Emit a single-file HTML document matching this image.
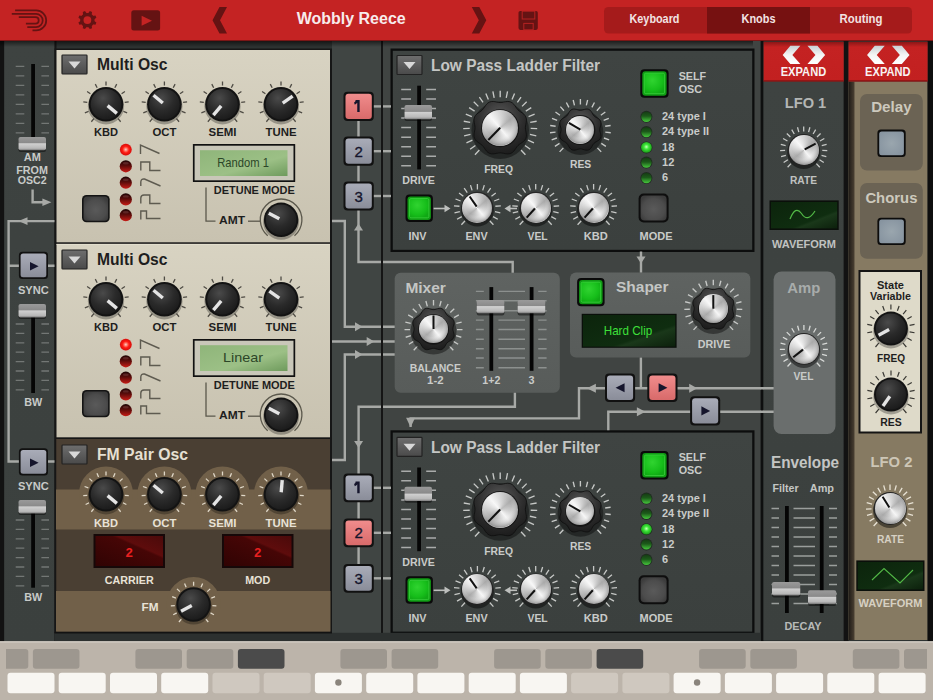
<!DOCTYPE html><html><head><meta charset="utf-8"><style>html,body{margin:0;padding:0;background:#2c302f;width:933px;height:700px;overflow:hidden}svg{display:block}</style></head><body>
<svg width="933" height="700" viewBox="0 0 933 700" font-family="'Liberation Sans', sans-serif">

<defs>
<radialGradient id="gBlack" cx="0.4" cy="0.3" r="0.75">
  <stop offset="0" stop-color="#4a4a4a"/><stop offset="0.55" stop-color="#2a2a2a"/><stop offset="1" stop-color="#1a1a1a"/>
</radialGradient>
<radialGradient id="gDarkRing" cx="0.5" cy="0.3" r="0.75">
  <stop offset="0" stop-color="#5a5a5a"/><stop offset="0.6" stop-color="#2c2c2c"/><stop offset="1" stop-color="#1a1a1a"/>
</radialGradient>
<linearGradient id="gSilver" x1="0" y1="0" x2="1" y2="1">
  <stop offset="0" stop-color="#ffffff"/><stop offset="0.45" stop-color="#d8d8d8"/><stop offset="0.55" stop-color="#f0f0f0"/><stop offset="1" stop-color="#8a8a8a"/>
</linearGradient>
<radialGradient id="gSilver2" cx="0.45" cy="0.4" r="0.6">
  <stop offset="0" stop-color="rgba(255,255,255,0.35)"/><stop offset="0.6" stop-color="rgba(255,255,255,0)"/><stop offset="1" stop-color="rgba(0,0,0,0.3)"/>
</radialGradient>
<linearGradient id="gDrop" x1="0" y1="0" x2="0" y2="1">
  <stop offset="0" stop-color="#6e6e6e"/><stop offset="1" stop-color="#4a4a4a"/>
</linearGradient>
<radialGradient id="gGreen" cx="0.4" cy="0.35" r="0.7">
  <stop offset="0" stop-color="#30d430"/><stop offset="0.7" stop-color="#16be1a"/><stop offset="1" stop-color="#10a814"/>
</radialGradient>
<linearGradient id="gGrayBtn" x1="0" y1="0" x2="0" y2="1">
  <stop offset="0" stop-color="#4d4d4d"/><stop offset="1" stop-color="#3a3a3a"/>
</linearGradient>
<linearGradient id="gBlueBtn" x1="0" y1="0" x2="0" y2="1">
  <stop offset="0" stop-color="#a9acb8"/><stop offset="1" stop-color="#8a8d99"/>
</linearGradient>
<linearGradient id="gRedBtn" x1="0" y1="0" x2="0" y2="1">
  <stop offset="0" stop-color="#f08c8c"/><stop offset="1" stop-color="#d86a6a"/>
</linearGradient>
<linearGradient id="gHandle" x1="0" y1="0" x2="0" y2="1">
  <stop offset="0" stop-color="#e8e8e8"/><stop offset="0.5" stop-color="#b4b4b4"/><stop offset="1" stop-color="#8c8c8c"/>
</linearGradient>
<linearGradient id="gLcdGreen" x1="0" y1="0" x2="1" y2="1">
  <stop offset="0" stop-color="#8fb57a"/><stop offset="0.6" stop-color="#9cc086"/><stop offset="1" stop-color="#6e9a5c"/>
</linearGradient>
<linearGradient id="gLcdDark" x1="0" y1="0" x2="1" y2="1">
  <stop offset="0" stop-color="#0c240c"/><stop offset="0.65" stop-color="#0f2d10"/><stop offset="0.7" stop-color="#1a381a"/><stop offset="1" stop-color="#0c200c"/>
</linearGradient>
<linearGradient id="gLcdRed" x1="0" y1="1" x2="1" y2="0">
  <stop offset="0" stop-color="#300303"/><stop offset="0.62" stop-color="#460606"/><stop offset="0.66" stop-color="#5e0c0c"/><stop offset="1" stop-color="#4a0a0a"/>
</linearGradient>
<radialGradient id="gLedRed" cx="0.5" cy="0.5" r="0.5">
  <stop offset="0" stop-color="#ffd0c8"/><stop offset="0.3" stop-color="#ff6a5a"/><stop offset="0.55" stop-color="#ff1c14"/><stop offset="1" stop-color="#d40c08"/>
</radialGradient>
<linearGradient id="gLedRedOff" x1="0" y1="0" x2="0" y2="1">
  <stop offset="0" stop-color="#1e0606"/><stop offset="0.45" stop-color="#5a0c0a"/><stop offset="1" stop-color="#c81c16"/>
</linearGradient>
<radialGradient id="gLedGreen" cx="0.5" cy="0.45" r="0.55">
  <stop offset="0" stop-color="#c8ffb8"/><stop offset="0.4" stop-color="#3ee83a"/><stop offset="1" stop-color="#1a9a18"/>
</radialGradient>
<linearGradient id="gLedGreenOff" x1="0" y1="0" x2="0" y2="1">
  <stop offset="0" stop-color="#163a14"/><stop offset="0.45" stop-color="#1c5a1a"/><stop offset="1" stop-color="#46c83c"/>
</linearGradient>
<linearGradient id="gExpand" x1="0" y1="0" x2="0" y2="1">
  <stop offset="0" stop-color="#8a1616"/><stop offset="0.13" stop-color="#c42222"/><stop offset="1" stop-color="#c22020"/>
</linearGradient>
<linearGradient id="gChev" x1="0" y1="0" x2="0" y2="1"><stop offset="0" stop-color="#c8d0d4"/><stop offset="0.5" stop-color="#f4f4f4"/><stop offset="1" stop-color="#ffffff"/></linearGradient>
<linearGradient id="pBrushF" x1="0" y1="0" x2="0" y2="1"><stop offset="0" stop-color="#3f4442"/><stop offset="1" stop-color="#3b403e"/></linearGradient>
<linearGradient id="pBrushM" x1="0" y1="0" x2="0" y2="1"><stop offset="0" stop-color="#5f6361"/><stop offset="1" stop-color="#585c5a"/></linearGradient>
<linearGradient id="pBrushR" x1="0" y1="0" x2="0" y2="1"><stop offset="0" stop-color="#3e4341"/><stop offset="1" stop-color="#3b403e"/></linearGradient>
<linearGradient id="gShadowTop" x1="0" y1="0" x2="0" y2="1"><stop offset="0" stop-color="rgba(0,0,0,0.55)"/><stop offset="1" stop-color="rgba(0,0,0,0)"/></linearGradient>
<linearGradient id="gHandle2" x1="0" y1="0" x2="0" y2="1"><stop offset="0" stop-color="#9a9a9a"/><stop offset="0.45" stop-color="#8a8a8a"/><stop offset="0.5" stop-color="#d0d0d0"/><stop offset="0.85" stop-color="#b8b8b8"/><stop offset="1" stop-color="#7a7a7a"/></linearGradient>
<radialGradient id="gGrayBtnR" cx="0.5" cy="0.55" r="0.6"><stop offset="0" stop-color="#5a5a5a"/><stop offset="0.7" stop-color="#4c4c4c"/><stop offset="1" stop-color="#3c3c3c"/></radialGradient>
<radialGradient id="gSkyBtn" cx="0.5" cy="0.5" r="0.6"><stop offset="0" stop-color="#9aa6ae"/><stop offset="1" stop-color="#8794a0"/></radialGradient>
<linearGradient id="gTanEdge" x1="0" y1="0" x2="1" y2="0"><stop offset="0" stop-color="#1e1a16"/><stop offset="1" stop-color="#4a4032"/></linearGradient>
<linearGradient id="gCream" x1="0" y1="0" x2="0" y2="1"><stop offset="0" stop-color="#d8d3c2"/><stop offset="1" stop-color="#c8c2b0"/></linearGradient>
</defs>

<rect x="0" y="0" width="933" height="700" fill="#2d3231" />
<rect x="0" y="0" width="933" height="41" fill="#c42323" />
<path d="M15.1 10.4H36.2A10 10 0 0 1 36.2 30.4H32.5" fill="none" stroke="#651313" stroke-width="1.75" />
<path d="M11.8 13.9H36.1A6.6 6.6 0 0 1 36.1 27.1H27.3" fill="none" stroke="#651313" stroke-width="1.75" />
<path d="M18.8 17.2H35.5A3.2 3.2 0 0 1 35.5 23.6H25.9" fill="none" stroke="#651313" stroke-width="1.75" />
<path d="M88.01 13.53L89.82 11.12L92.04 12.04L91.61 15.02L92.48 15.89L95.46 15.46L96.38 17.68L93.97 19.49L93.97 20.71L96.38 22.52L95.46 24.74L92.48 24.31L91.61 25.18L92.04 28.16L89.82 29.08L88.01 26.67L86.79 26.67L84.98 29.08L82.76 28.16L83.19 25.18L82.32 24.31L79.34 24.74L78.42 22.52L80.83 20.71L80.83 19.49L78.42 17.68L79.34 15.46L82.32 15.89L83.19 15.02L82.76 12.04L84.98 11.12L86.79 13.53Z" fill="#651313" />
<circle cx="87.4" cy="20.1" r="7.2" fill="#651313"/>
<circle cx="87.4" cy="20.1" r="3.9" fill="#c42323"/>
<rect x="131.3" y="10.3" width="28.8" height="20.3" fill="#651313" rx="2.5" />
<path d="M141.6 15.8L152 20.8L141.6 25.8Z" fill="#c42323" />
<path d="M219.5 7H227L220 20.2L227 33.5H219.5L212.5 20.2Z" fill="#651313" />
<path d="M471.8 7H479.3L486.3 20.2L479.3 33.5H471.8L478.8 20.2Z" fill="#651313" />
<rect x="518.5" y="10.9" width="19.3" height="19" fill="#651313" rx="1.8" />
<rect x="522.2" y="11.2" width="12.6" height="7.8" fill="none" stroke="#b52222" stroke-width="1" />
<rect x="523.8" y="23.4" width="9.4" height="6.4" fill="none" stroke="#b52222" stroke-width="1" />
<text x="351.2" y="24" font-size="16" fill="#f7ecec" font-weight="bold" text-anchor="middle" font-family="'Liberation Sans', sans-serif" textLength="109" lengthAdjust="spacingAndGlyphs">Wobbly Reece</text>
<rect x="604" y="7" width="308" height="26.5" fill="#a51b1b" rx="4.5" />
<rect x="707" y="7" width="103" height="26.5" fill="#761111" />
<text x="654.5" y="23.2" font-size="12" fill="#f2e2e2" font-weight="bold" text-anchor="middle" font-family="'Liberation Sans', sans-serif" textLength="50" lengthAdjust="spacingAndGlyphs">Keyboard</text>
<text x="758.5" y="23.2" font-size="12" fill="#f2e2e2" font-weight="bold" text-anchor="middle" font-family="'Liberation Sans', sans-serif" textLength="34" lengthAdjust="spacingAndGlyphs">Knobs</text>
<text x="861" y="23.2" font-size="12" fill="#f2e2e2" font-weight="bold" text-anchor="middle" font-family="'Liberation Sans', sans-serif" textLength="43" lengthAdjust="spacingAndGlyphs">Routing</text>
<rect x="0" y="40" width="933" height="1.2" fill="#7a1616" />
<rect x="0" y="41" width="4.3" height="601" fill="#121212" />
<rect x="4.3" y="41" width="50.2" height="601" fill="url(#pBrushR)" />
<rect x="54.5" y="41" width="2" height="601" fill="#161616" />
<rect x="332" y="41" width="50" height="601" fill="#404543" />
<rect x="383" y="41" width="378" height="601" fill="#404442" />
<rect x="381" y="41" width="2" height="601" fill="#151515" />
<rect x="54.5" y="48.5" width="277.5" height="584.5" fill="#161616" />
<rect x="56.5" y="50" width="273.5" height="192.3" fill="url(#gCream)" />
<rect x="56.5" y="243.9" width="273.5" height="193.4" fill="url(#gCream)" />
<rect x="56.5" y="243.9" width="273.5" height="1" fill="#e4dfcf" />
<rect x="62" y="55" width="25" height="19" fill="url(#gDrop)" rx="0.8" stroke="#222" stroke-width="1.2" />
<path d="M68.5 61.5L80.5 61.5L74.5 68.5Z" fill="#d8d8d8" />
<text x="97" y="69.8" font-size="16" fill="#1e1e1e" font-weight="bold" text-anchor="start" font-family="'Liberation Sans', sans-serif" textLength="70.5" lengthAdjust="spacingAndGlyphs">Multi Osc</text>
<path d="M93.92 118.70L91.34 121.77M88.57 111.34L84.86 112.84M87.30 102.33L83.32 101.92M90.41 93.79L87.10 91.55M97.17 87.70L95.30 84.17M106.00 85.50L106.00 81.50M114.83 87.70L116.70 84.17M121.59 93.79L124.90 91.55M124.70 102.33L128.68 101.92M123.43 111.34L127.14 112.84M118.08 118.70L120.66 121.77" fill="none" stroke="#4e4b44" stroke-width="1.3" />
<circle cx="106" cy="106.3" r="18.1" fill="rgba(0,0,0,0.28)"/>
<circle cx="106" cy="104.3" r="17.3" fill="#131313"/>
<circle cx="106" cy="104.3" r="15.3" fill="url(#gBlack)"/>
<line x1="107.59" y1="105.63" x2="116.87" y2="113.42" stroke="#e4e4e4" stroke-width="3.4" stroke-linecap="butt"/>
<text x="106" y="136.3" font-size="11" fill="#1e1e1e" font-weight="bold" text-anchor="middle" font-family="'Liberation Sans', sans-serif" textLength="24" lengthAdjust="spacingAndGlyphs">KBD</text>
<path d="M152.32 118.70L149.74 121.77M146.97 111.34L143.26 112.84M145.70 102.33L141.72 101.92M148.81 93.79L145.50 91.55M155.57 87.70L153.70 84.17M164.40 85.50L164.40 81.50M173.23 87.70L175.10 84.17M179.99 93.79L183.30 91.55M183.10 102.33L187.08 101.92M181.83 111.34L185.54 112.84M176.48 118.70L179.06 121.77" fill="none" stroke="#4e4b44" stroke-width="1.3" />
<circle cx="164.4" cy="106.3" r="18.1" fill="rgba(0,0,0,0.28)"/>
<circle cx="164.4" cy="104.3" r="17.3" fill="#131313"/>
<circle cx="164.4" cy="104.3" r="15.3" fill="url(#gBlack)"/>
<line x1="162.81" y1="102.97" x2="153.53" y2="95.18" stroke="#e4e4e4" stroke-width="3.4" stroke-linecap="butt"/>
<text x="164.4" y="136.3" font-size="11" fill="#1e1e1e" font-weight="bold" text-anchor="middle" font-family="'Liberation Sans', sans-serif" textLength="24" lengthAdjust="spacingAndGlyphs">OCT</text>
<path d="M210.42 118.70L207.84 121.77M205.07 111.34L201.36 112.84M203.80 102.33L199.82 101.92M206.91 93.79L203.60 91.55M213.67 87.70L211.80 84.17M222.50 85.50L222.50 81.50M231.33 87.70L233.20 84.17M238.09 93.79L241.40 91.55M241.20 102.33L245.18 101.92M239.93 111.34L243.64 112.84M234.58 118.70L237.16 121.77" fill="none" stroke="#4e4b44" stroke-width="1.3" />
<circle cx="222.5" cy="106.3" r="18.1" fill="rgba(0,0,0,0.28)"/>
<circle cx="222.5" cy="104.3" r="17.3" fill="#131313"/>
<circle cx="222.5" cy="104.3" r="15.3" fill="url(#gBlack)"/>
<line x1="221.17" y1="105.89" x2="213.38" y2="115.17" stroke="#e4e4e4" stroke-width="3.4" stroke-linecap="butt"/>
<text x="222.5" y="136.3" font-size="11" fill="#1e1e1e" font-weight="bold" text-anchor="middle" font-family="'Liberation Sans', sans-serif" textLength="28" lengthAdjust="spacingAndGlyphs">SEMI</text>
<path d="M268.92 118.70L266.34 121.77M263.57 111.34L259.86 112.84M262.30 102.33L258.32 101.92M265.41 93.79L262.10 91.55M272.17 87.70L270.30 84.17M281.00 85.50L281.00 81.50M289.83 87.70L291.70 84.17M296.59 93.79L299.90 91.55M299.70 102.33L303.68 101.92M298.43 111.34L302.14 112.84M293.08 118.70L295.66 121.77" fill="none" stroke="#4e4b44" stroke-width="1.3" />
<circle cx="281" cy="106.3" r="18.1" fill="rgba(0,0,0,0.28)"/>
<circle cx="281" cy="104.3" r="17.3" fill="#131313"/>
<circle cx="281" cy="104.3" r="15.3" fill="url(#gBlack)"/>
<line x1="282.70" y1="103.11" x2="292.62" y2="96.16" stroke="#e4e4e4" stroke-width="3.4" stroke-linecap="butt"/>
<text x="281" y="136.3" font-size="11" fill="#1e1e1e" font-weight="bold" text-anchor="middle" font-family="'Liberation Sans', sans-serif" textLength="31" lengthAdjust="spacingAndGlyphs">TUNE</text>
<circle cx="125.8" cy="149.6" r="6.3" fill="#e8a098" opacity="0.5"/>
<circle cx="125.8" cy="149.6" r="5.9" fill="url(#gLedRed)"/>
<circle cx="125.8" cy="166.3" r="6.1" fill="url(#gLedRedOff)"/>
<ellipse cx="125.8" cy="163.3" rx="3" ry="1.2" fill="#6a3030" opacity="0.7"/>
<circle cx="125.8" cy="182.7" r="6.1" fill="url(#gLedRedOff)"/>
<ellipse cx="125.8" cy="179.7" rx="3" ry="1.2" fill="#6a3030" opacity="0.7"/>
<circle cx="125.8" cy="199.4" r="6.1" fill="url(#gLedRedOff)"/>
<ellipse cx="125.8" cy="196.4" rx="3" ry="1.2" fill="#6a3030" opacity="0.7"/>
<circle cx="125.8" cy="215.2" r="6.1" fill="url(#gLedRedOff)"/>
<ellipse cx="125.8" cy="212.2" rx="3" ry="1.2" fill="#6a3030" opacity="0.7"/>
<path d="M140.5 154V145L159.5 153.5" fill="none" stroke="#5e5b50" stroke-width="1.4" />
<path d="M140.8 170.5V162H149.8V170.5H160.5" fill="none" stroke="#5e5b50" stroke-width="1.4" />
<path d="M140.8 186V182Q141 178.5 144.5 179L160.5 186" fill="none" stroke="#5e5b50" stroke-width="1.4" />
<path d="M140.8 203.5V198Q141 195 144 195H149.8V203.5H160.5" fill="none" stroke="#5e5b50" stroke-width="1.4" />
<path d="M140.8 219.5V211H146.5V218.5H160.5" fill="none" stroke="#5e5b50" stroke-width="1.4" />
<rect x="82" y="195" width="27.7" height="27.3" fill="#141414" rx="4.5" />
<rect x="83.6" y="196.6" width="24.5" height="24.1" fill="url(#gGrayBtnR)" rx="3.5" transform="translate(0 0)"/>
<rect x="192.9" y="144" width="102.3" height="38" fill="#111" rx="0.5" />
<rect x="194.6" y="145.7" width="98.9" height="34.6" fill="#c9c7b9" transform="translate(0 0)"/>
<rect x="200" y="150.2" width="87.5" height="25.8" fill="url(#gLcdGreen)" />
<text x="243.1" y="166.5" font-size="13" fill="#2c4628" font-weight="normal" text-anchor="middle" font-family="'Liberation Sans', sans-serif" textLength="51.6" lengthAdjust="spacingAndGlyphs">Random 1</text>
<text x="254.3" y="193.8" font-size="11" fill="#1e1e1e" font-weight="bold" text-anchor="middle" font-family="'Liberation Sans', sans-serif" textLength="81" lengthAdjust="spacingAndGlyphs">DETUNE MODE</text>
<path d="M206 187.5V221.2H215.5" fill="none" stroke="#5b584c" stroke-width="1.3" />
<text x="232" y="224" font-size="11" fill="#1e1e1e" font-weight="bold" text-anchor="middle" font-family="'Liberation Sans', sans-serif" textLength="26" lengthAdjust="spacingAndGlyphs">AMT</text>
<path d="M248 221.2H260.3" fill="none" stroke="#5b584c" stroke-width="1.3" />
<path d="M267.73 235.73A20.8 20.8 0 1 1 294.47 235.73" fill="none" stroke="#5b584c" stroke-width="1.3" />
<circle cx="281.1" cy="221.8" r="18" fill="rgba(0,0,0,0.28)"/>
<circle cx="281.1" cy="219.8" r="17.2" fill="#131313"/>
<circle cx="281.1" cy="219.8" r="15.2" fill="url(#gBlack)"/>
<line x1="279.30" y1="218.84" x2="268.79" y2="213.26" stroke="#e4e4e4" stroke-width="3.4" />
<rect x="62" y="250" width="25" height="19" fill="url(#gDrop)" rx="0.8" stroke="#222" stroke-width="1.2" />
<path d="M68.5 256.5L80.5 256.5L74.5 263.5Z" fill="#d8d8d8" />
<text x="97" y="264.8" font-size="16" fill="#1e1e1e" font-weight="bold" text-anchor="start" font-family="'Liberation Sans', sans-serif" textLength="70.5" lengthAdjust="spacingAndGlyphs">Multi Osc</text>
<path d="M93.92 313.70L91.34 316.77M88.57 306.34L84.86 307.84M87.30 297.33L83.32 296.92M90.41 288.79L87.10 286.55M97.17 282.70L95.30 279.17M106.00 280.50L106.00 276.50M114.83 282.70L116.70 279.17M121.59 288.79L124.90 286.55M124.70 297.33L128.68 296.92M123.43 306.34L127.14 307.84M118.08 313.70L120.66 316.77" fill="none" stroke="#4e4b44" stroke-width="1.3" />
<circle cx="106" cy="301.3" r="18.1" fill="rgba(0,0,0,0.28)"/>
<circle cx="106" cy="299.3" r="17.3" fill="#131313"/>
<circle cx="106" cy="299.3" r="15.3" fill="url(#gBlack)"/>
<line x1="107.59" y1="300.63" x2="116.87" y2="308.42" stroke="#e4e4e4" stroke-width="3.4" stroke-linecap="butt"/>
<text x="106" y="331.3" font-size="11" fill="#1e1e1e" font-weight="bold" text-anchor="middle" font-family="'Liberation Sans', sans-serif" textLength="24" lengthAdjust="spacingAndGlyphs">KBD</text>
<path d="M152.32 313.70L149.74 316.77M146.97 306.34L143.26 307.84M145.70 297.33L141.72 296.92M148.81 288.79L145.50 286.55M155.57 282.70L153.70 279.17M164.40 280.50L164.40 276.50M173.23 282.70L175.10 279.17M179.99 288.79L183.30 286.55M183.10 297.33L187.08 296.92M181.83 306.34L185.54 307.84M176.48 313.70L179.06 316.77" fill="none" stroke="#4e4b44" stroke-width="1.3" />
<circle cx="164.4" cy="301.3" r="18.1" fill="rgba(0,0,0,0.28)"/>
<circle cx="164.4" cy="299.3" r="17.3" fill="#131313"/>
<circle cx="164.4" cy="299.3" r="15.3" fill="url(#gBlack)"/>
<line x1="162.81" y1="297.97" x2="153.53" y2="290.18" stroke="#e4e4e4" stroke-width="3.4" stroke-linecap="butt"/>
<text x="164.4" y="331.3" font-size="11" fill="#1e1e1e" font-weight="bold" text-anchor="middle" font-family="'Liberation Sans', sans-serif" textLength="24" lengthAdjust="spacingAndGlyphs">OCT</text>
<path d="M210.42 313.70L207.84 316.77M205.07 306.34L201.36 307.84M203.80 297.33L199.82 296.92M206.91 288.79L203.60 286.55M213.67 282.70L211.80 279.17M222.50 280.50L222.50 276.50M231.33 282.70L233.20 279.17M238.09 288.79L241.40 286.55M241.20 297.33L245.18 296.92M239.93 306.34L243.64 307.84M234.58 313.70L237.16 316.77" fill="none" stroke="#4e4b44" stroke-width="1.3" />
<circle cx="222.5" cy="301.3" r="18.1" fill="rgba(0,0,0,0.28)"/>
<circle cx="222.5" cy="299.3" r="17.3" fill="#131313"/>
<circle cx="222.5" cy="299.3" r="15.3" fill="url(#gBlack)"/>
<line x1="221.17" y1="300.89" x2="213.38" y2="310.17" stroke="#e4e4e4" stroke-width="3.4" stroke-linecap="butt"/>
<text x="222.5" y="331.3" font-size="11" fill="#1e1e1e" font-weight="bold" text-anchor="middle" font-family="'Liberation Sans', sans-serif" textLength="28" lengthAdjust="spacingAndGlyphs">SEMI</text>
<path d="M268.92 313.70L266.34 316.77M263.57 306.34L259.86 307.84M262.30 297.33L258.32 296.92M265.41 288.79L262.10 286.55M272.17 282.70L270.30 279.17M281.00 280.50L281.00 276.50M289.83 282.70L291.70 279.17M296.59 288.79L299.90 286.55M299.70 297.33L303.68 296.92M298.43 306.34L302.14 307.84M293.08 313.70L295.66 316.77" fill="none" stroke="#4e4b44" stroke-width="1.3" />
<circle cx="281" cy="301.3" r="18.1" fill="rgba(0,0,0,0.28)"/>
<circle cx="281" cy="299.3" r="17.3" fill="#131313"/>
<circle cx="281" cy="299.3" r="15.3" fill="url(#gBlack)"/>
<line x1="279.30" y1="298.11" x2="269.38" y2="291.16" stroke="#e4e4e4" stroke-width="3.4" stroke-linecap="butt"/>
<text x="281" y="331.3" font-size="11" fill="#1e1e1e" font-weight="bold" text-anchor="middle" font-family="'Liberation Sans', sans-serif" textLength="31" lengthAdjust="spacingAndGlyphs">TUNE</text>
<circle cx="125.8" cy="344.6" r="6.3" fill="#e8a098" opacity="0.5"/>
<circle cx="125.8" cy="344.6" r="5.9" fill="url(#gLedRed)"/>
<circle cx="125.8" cy="361.3" r="6.1" fill="url(#gLedRedOff)"/>
<ellipse cx="125.8" cy="358.3" rx="3" ry="1.2" fill="#6a3030" opacity="0.7"/>
<circle cx="125.8" cy="377.7" r="6.1" fill="url(#gLedRedOff)"/>
<ellipse cx="125.8" cy="374.7" rx="3" ry="1.2" fill="#6a3030" opacity="0.7"/>
<circle cx="125.8" cy="394.4" r="6.1" fill="url(#gLedRedOff)"/>
<ellipse cx="125.8" cy="391.4" rx="3" ry="1.2" fill="#6a3030" opacity="0.7"/>
<circle cx="125.8" cy="410.2" r="6.1" fill="url(#gLedRedOff)"/>
<ellipse cx="125.8" cy="407.2" rx="3" ry="1.2" fill="#6a3030" opacity="0.7"/>
<path d="M140.5 349V340L159.5 348.5" fill="none" stroke="#5e5b50" stroke-width="1.4" />
<path d="M140.8 365.5V357H149.8V365.5H160.5" fill="none" stroke="#5e5b50" stroke-width="1.4" />
<path d="M140.8 381V377Q141 373.5 144.5 374L160.5 381" fill="none" stroke="#5e5b50" stroke-width="1.4" />
<path d="M140.8 398.5V393Q141 390 144 390H149.8V398.5H160.5" fill="none" stroke="#5e5b50" stroke-width="1.4" />
<path d="M140.8 414.5V406H146.5V413.5H160.5" fill="none" stroke="#5e5b50" stroke-width="1.4" />
<rect x="82" y="390" width="27.7" height="27.3" fill="#141414" rx="4.5" />
<rect x="83.6" y="196.6" width="24.5" height="24.1" fill="url(#gGrayBtnR)" rx="3.5" transform="translate(0 195)"/>
<rect x="192.9" y="339" width="102.3" height="38" fill="#111" rx="0.5" />
<rect x="194.6" y="145.7" width="98.9" height="34.6" fill="#c9c7b9" transform="translate(0 195)"/>
<rect x="200" y="345.2" width="87.5" height="25.8" fill="url(#gLcdGreen)" />
<text x="243.1" y="361.5" font-size="13" fill="#2c4628" font-weight="normal" text-anchor="middle" font-family="'Liberation Sans', sans-serif" textLength="40" lengthAdjust="spacingAndGlyphs">Linear</text>
<text x="254.3" y="388.8" font-size="11" fill="#1e1e1e" font-weight="bold" text-anchor="middle" font-family="'Liberation Sans', sans-serif" textLength="81" lengthAdjust="spacingAndGlyphs">DETUNE MODE</text>
<path d="M206 382.5V416.2H215.5" fill="none" stroke="#5b584c" stroke-width="1.3" />
<text x="232" y="419" font-size="11" fill="#1e1e1e" font-weight="bold" text-anchor="middle" font-family="'Liberation Sans', sans-serif" textLength="26" lengthAdjust="spacingAndGlyphs">AMT</text>
<path d="M248 416.2H260.3" fill="none" stroke="#5b584c" stroke-width="1.3" />
<path d="M267.73 430.73A20.8 20.8 0 1 1 294.47 430.73" fill="none" stroke="#5b584c" stroke-width="1.3" />
<circle cx="281.1" cy="416.8" r="18" fill="rgba(0,0,0,0.28)"/>
<circle cx="281.1" cy="414.8" r="17.2" fill="#131313"/>
<circle cx="281.1" cy="414.8" r="15.2" fill="url(#gBlack)"/>
<line x1="279.30" y1="413.84" x2="268.79" y2="408.26" stroke="#e4e4e4" stroke-width="3.4" />
<rect x="56.5" y="439" width="273.5" height="192" fill="#4a3f33" />
<rect x="56.5" y="439" width="273.5" height="192.5" fill="#4a3f33" />
<rect x="56" y="489.5" width="274.5" height="40" fill="#716049" />
<rect x="56" y="591" width="274.5" height="40.5" fill="#716049" />
<circle cx="106" cy="493.5" r="27" fill="#716049"/>
<circle cx="164.4" cy="493.5" r="27" fill="#716049"/>
<circle cx="222.5" cy="493.5" r="27" fill="#716049"/>
<circle cx="281" cy="493.5" r="27" fill="#716049"/>
<circle cx="193.6" cy="604" r="27" fill="#716049"/>
<rect x="56" y="439.5" width="274.5" height="48" fill="#4a3f33" opacity="0"/>
<rect x="62" y="445" width="25" height="19" fill="url(#gDrop)" rx="0.8" stroke="#222" stroke-width="1.2" />
<path d="M68.5 451.5L80.5 451.5L74.5 458.5Z" fill="#d8d8d8" />
<text x="97" y="459.8" font-size="16" fill="#e6e0d2" font-weight="bold" text-anchor="start" font-family="'Liberation Sans', sans-serif" textLength="91" lengthAdjust="spacingAndGlyphs">FM Pair Osc</text>
<path d="M93.92 508.70L91.34 511.77M89.20 502.74L85.63 504.53M87.23 495.39L83.24 495.63M88.33 487.87L84.58 486.50M92.33 481.40L89.42 478.65M98.55 477.04L96.97 473.36M106.00 475.50L106.00 471.50M113.45 477.04L115.03 473.36M119.67 481.40L122.58 478.65M123.67 487.87L127.42 486.50M124.77 495.39L128.76 495.63M122.80 502.74L126.37 504.53M118.08 508.70L120.66 511.77" fill="none" stroke="#e0d8c8" stroke-width="1.3" />
<circle cx="106" cy="496.3" r="18.1" fill="rgba(0,0,0,0.28)"/>
<circle cx="106" cy="494.3" r="17.3" fill="#131313"/>
<circle cx="106" cy="494.3" r="15.3" fill="url(#gBlack)"/>
<line x1="107.59" y1="495.63" x2="116.87" y2="503.42" stroke="#e4e4e4" stroke-width="3.4" stroke-linecap="butt"/>
<text x="106" y="526.5" font-size="11" fill="#e8e2d6" font-weight="bold" text-anchor="middle" font-family="'Liberation Sans', sans-serif" textLength="24" lengthAdjust="spacingAndGlyphs">KBD</text>
<path d="M152.32 508.70L149.74 511.77M147.60 502.74L144.03 504.53M145.63 495.39L141.64 495.63M146.73 487.87L142.98 486.50M150.73 481.40L147.82 478.65M156.95 477.04L155.37 473.36M164.40 475.50L164.40 471.50M171.85 477.04L173.43 473.36M178.07 481.40L180.98 478.65M182.07 487.87L185.82 486.50M183.17 495.39L187.16 495.63M181.20 502.74L184.77 504.53M176.48 508.70L179.06 511.77" fill="none" stroke="#e0d8c8" stroke-width="1.3" />
<circle cx="164.4" cy="496.3" r="18.1" fill="rgba(0,0,0,0.28)"/>
<circle cx="164.4" cy="494.3" r="17.3" fill="#131313"/>
<circle cx="164.4" cy="494.3" r="15.3" fill="url(#gBlack)"/>
<line x1="162.81" y1="492.97" x2="153.53" y2="485.18" stroke="#e4e4e4" stroke-width="3.4" stroke-linecap="butt"/>
<text x="164.4" y="526.5" font-size="11" fill="#e8e2d6" font-weight="bold" text-anchor="middle" font-family="'Liberation Sans', sans-serif" textLength="24" lengthAdjust="spacingAndGlyphs">OCT</text>
<path d="M210.42 508.70L207.84 511.77M205.70 502.74L202.13 504.53M203.73 495.39L199.74 495.63M204.83 487.87L201.08 486.50M208.83 481.40L205.92 478.65M215.05 477.04L213.47 473.36M222.50 475.50L222.50 471.50M229.95 477.04L231.53 473.36M236.17 481.40L239.08 478.65M240.17 487.87L243.92 486.50M241.27 495.39L245.26 495.63M239.30 502.74L242.87 504.53M234.58 508.70L237.16 511.77" fill="none" stroke="#e0d8c8" stroke-width="1.3" />
<circle cx="222.5" cy="496.3" r="18.1" fill="rgba(0,0,0,0.28)"/>
<circle cx="222.5" cy="494.3" r="17.3" fill="#131313"/>
<circle cx="222.5" cy="494.3" r="15.3" fill="url(#gBlack)"/>
<line x1="221.17" y1="495.89" x2="213.38" y2="505.17" stroke="#e4e4e4" stroke-width="3.4" stroke-linecap="butt"/>
<text x="222.5" y="526.5" font-size="11" fill="#e8e2d6" font-weight="bold" text-anchor="middle" font-family="'Liberation Sans', sans-serif" textLength="28" lengthAdjust="spacingAndGlyphs">SEMI</text>
<path d="M268.92 508.70L266.34 511.77M264.20 502.74L260.63 504.53M262.23 495.39L258.24 495.63M263.33 487.87L259.58 486.50M267.33 481.40L264.42 478.65M273.55 477.04L271.97 473.36M281.00 475.50L281.00 471.50M288.45 477.04L290.03 473.36M294.67 481.40L297.58 478.65M298.67 487.87L302.42 486.50M299.77 495.39L303.76 495.63M297.80 502.74L301.37 504.53M293.08 508.70L295.66 511.77" fill="none" stroke="#e0d8c8" stroke-width="1.3" />
<circle cx="281" cy="496.3" r="18.1" fill="rgba(0,0,0,0.28)"/>
<circle cx="281" cy="494.3" r="17.3" fill="#131313"/>
<circle cx="281" cy="494.3" r="15.3" fill="url(#gBlack)"/>
<line x1="281.18" y1="492.23" x2="282.24" y2="480.17" stroke="#e4e4e4" stroke-width="3.4" stroke-linecap="butt"/>
<text x="281" y="526.5" font-size="11" fill="#e8e2d6" font-weight="bold" text-anchor="middle" font-family="'Liberation Sans', sans-serif" textLength="31" lengthAdjust="spacingAndGlyphs">TUNE</text>
<rect x="93.5" y="534" width="71.5" height="34" fill="#160808" />
<rect x="95.5" y="536" width="67.5" height="30" fill="url(#gLcdRed)" />
<text x="129.2" y="556.5" font-size="13" fill="#e82020" font-weight="bold" text-anchor="middle" font-family="'Liberation Mono', monospace" >2</text>
<text x="129.2" y="584" font-size="11" fill="#e8e2d6" font-weight="bold" text-anchor="middle" font-family="'Liberation Sans', sans-serif" textLength="49" lengthAdjust="spacingAndGlyphs">CARRIER</text>
<rect x="222" y="534" width="71.5" height="34" fill="#160808" />
<rect x="224" y="536" width="67.5" height="30" fill="url(#gLcdRed)" />
<text x="257.7" y="556.5" font-size="13" fill="#e82020" font-weight="bold" text-anchor="middle" font-family="'Liberation Mono', monospace" >2</text>
<text x="257.7" y="584" font-size="11" fill="#e8e2d6" font-weight="bold" text-anchor="middle" font-family="'Liberation Sans', sans-serif" textLength="25" lengthAdjust="spacingAndGlyphs">MOD</text>
<path d="M181.52 618.90L178.94 621.97M176.80 612.94L173.23 614.73M174.83 605.59L170.84 605.83M175.93 598.07L172.18 596.70M179.93 591.60L177.02 588.85M186.15 587.24L184.57 583.56M193.60 585.70L193.60 581.70M201.05 587.24L202.63 583.56M207.27 591.60L210.18 588.85M211.27 598.07L215.02 596.70M212.37 605.59L216.36 605.83M210.40 612.94L213.97 614.73M205.68 618.90L208.26 621.97" fill="none" stroke="#e0d8c8" stroke-width="1.3" />
<circle cx="193.6" cy="606.5" r="18.1" fill="rgba(0,0,0,0.28)"/>
<circle cx="193.6" cy="604.5" r="17.3" fill="#131313"/>
<circle cx="193.6" cy="604.5" r="15.3" fill="url(#gBlack)"/>
<line x1="191.77" y1="605.47" x2="181.07" y2="611.16" stroke="#e4e4e4" stroke-width="3.4" stroke-linecap="butt"/>
<text x="150" y="610.5" font-size="11" fill="#e8e2d6" font-weight="bold" text-anchor="middle" font-family="'Liberation Sans', sans-serif" textLength="17" lengthAdjust="spacingAndGlyphs">FM</text>
<rect x="390.5" y="48.5" width="364" height="203.5" fill="#0c0d0d" />
<rect x="392.8" y="50.8" width="359.4" height="199" fill="url(#pBrushF)" />
<rect x="397" y="55.5" width="25" height="19" fill="url(#gDrop)" rx="0.8" stroke="#222" stroke-width="1.2" />
<path d="M403.5 62.0L415.5 62.0L409.5 69.0Z" fill="#d8d8d8" />
<text x="431" y="70.8" font-size="16" fill="#c4c6c4" font-weight="bold" text-anchor="start" font-family="'Liberation Sans', sans-serif" textLength="169" lengthAdjust="spacingAndGlyphs">Low Pass Ladder Filter</text>
<path d="M401.2 89.4H411M426.2 89.4H436M401.2 99.0H411M426.2 99.0H436M401.2 108.5H411M426.2 108.5H436M401.2 118.1H411M426.2 118.1H436M401.2 127.6H411M426.2 127.6H436M401.2 137.2H411M426.2 137.2H436M401.2 146.7H411M426.2 146.7H436M401.2 156.2H411M426.2 156.2H436M401.2 165.8H411M426.2 165.8H436" fill="none" stroke="#a9abaa" stroke-width="1.5" />
<rect x="417.2" y="85.7" width="3.8" height="83.7" fill="#050505" />
<rect x="404.5" y="107" width="27.5" height="14" rx="2" fill="rgba(0,0,0,0.45)"/>
<rect x="404.5" y="105" width="27.5" height="14.3" fill="url(#gHandle2)" rx="2" />
<text x="418.6" y="184.2" font-size="11" fill="#c9cbc9" font-weight="bold" text-anchor="middle" font-family="'Liberation Sans', sans-serif" textLength="32.5" lengthAdjust="spacingAndGlyphs">DRIVE</text>
<path d="M479.40 150.01L474.97 154.76M475.40 145.45L470.11 149.23M472.37 140.19L466.44 142.85M470.45 134.43L464.11 135.87M469.71 128.41L463.21 128.56M470.17 122.36L463.77 121.22M471.82 116.52L465.77 114.14M474.60 111.13L469.14 107.59M478.38 106.39L473.73 101.84M483.03 102.49L479.38 97.12M488.36 99.59L485.84 93.60M494.16 97.80L492.88 91.43M500.20 97.20L500.20 90.70M506.24 97.80L507.52 91.43M512.04 99.59L514.56 93.60M517.37 102.49L521.02 97.12M522.02 106.39L526.67 101.84M525.80 111.13L531.26 107.59M528.58 116.52L534.63 114.14M530.23 122.36L536.63 121.22M530.69 128.41L537.19 128.56M529.95 134.43L536.29 135.87M528.03 140.19L533.96 142.85M525.00 145.45L530.29 149.23M521.00 150.01L525.43 154.76" fill="none" stroke="#c6c8c6" stroke-width="1.35" />
<circle cx="500.2" cy="130.2" r="28.8" fill="rgba(0,0,0,0.4)"/>
<path d="M500.20 102.50L501.86 102.38L503.57 102.07L505.37 101.71L507.23 101.48L509.08 101.54L510.84 102.02L512.42 102.92L513.77 104.19L514.92 105.67L515.94 107.19L516.93 108.62L518.02 109.88L519.28 110.97L520.71 111.96L522.23 112.98L523.71 114.12L524.98 115.48L525.88 117.06L526.36 118.82L526.42 120.67L526.19 122.53L525.83 124.33L525.52 126.04L525.40 127.70L525.52 129.36L525.83 131.07L526.19 132.87L526.42 134.73L526.36 136.58L525.88 138.34L524.98 139.92L523.71 141.28L522.23 142.42L520.71 143.44L519.28 144.43L518.02 145.52L516.93 146.78L515.94 148.21L514.92 149.73L513.77 151.21L512.42 152.48L510.84 153.38L509.08 153.86L507.23 153.92L505.37 153.69L503.57 153.33L501.86 153.02L500.20 152.90L498.54 153.02L496.83 153.33L495.03 153.69L493.17 153.92L491.32 153.86L489.56 153.38L487.98 152.48L486.62 151.21L485.48 149.73L484.46 148.21L483.47 146.78L482.38 145.52L481.12 144.43L479.69 143.44L478.17 142.42L476.69 141.28L475.42 139.92L474.52 138.34L474.04 136.58L473.98 134.73L474.21 132.87L474.57 131.07L474.88 129.36L475.00 127.70L474.88 126.04L474.57 124.33L474.21 122.53L473.98 120.67L474.04 118.82L474.52 117.06L475.42 115.48L476.69 114.12L478.17 112.98L479.69 111.96L481.12 110.97L482.38 109.88L483.47 108.62L484.46 107.19L485.48 105.67L486.62 104.19L487.98 102.92L489.56 102.02L491.32 101.54L493.17 101.48L495.03 101.71L496.83 102.07L498.54 102.38L500.20 102.50Z" fill="url(#gDarkRing)" stroke="#0e0e0e" stroke-width="0.8" />
<circle cx="500.2" cy="128.2" r="19" fill="#151515"/>
<foreignObject x="482.20" y="109.70" width="36.00" height="36.00"><div style="width:36.00px;height:36.00px;border-radius:50%;background:conic-gradient(from -40deg,#f6f6f6,#a8a8a8 90deg,#f6f6f6 180deg,#a8a8a8 270deg,#f6f6f6)"></div></foreignObject>
<circle cx="500.2" cy="127.7" r="18" fill="url(#gSilver2)"/>
<line x1="500.2" y1="127.7" x2="488.32" y2="140.00" stroke="#111" stroke-width="2" />
<text x="498.6" y="173.3" font-size="11" fill="#c9cbc9" font-weight="bold" text-anchor="middle" font-family="'Liberation Sans', sans-serif" textLength="28.8" lengthAdjust="spacingAndGlyphs">FREQ</text>
<path d="M563.35 147.88L559.60 151.91M559.50 143.33L554.91 146.35M556.85 137.99L551.67 139.83M555.53 132.17L550.06 132.74M555.63 126.21L550.18 125.46M557.14 120.44L552.02 118.42M559.97 115.19L555.48 112.02M563.97 110.76L560.35 106.62M568.90 107.40L566.36 102.52M574.48 105.31L573.18 99.97M580.40 104.60L580.40 99.10M586.32 105.31L587.62 99.97M591.90 107.40L594.44 102.52M596.83 110.76L600.45 106.62M600.83 115.19L605.32 112.02M603.66 120.44L608.78 118.42M605.17 126.21L610.62 125.46M605.27 132.17L610.74 132.74M603.95 137.99L609.13 139.83M601.30 143.33L605.89 146.35M597.45 147.88L601.20 151.91" fill="none" stroke="#c6c8c6" stroke-width="1.35" />
<circle cx="580.4" cy="132.1" r="22.9" fill="rgba(0,0,0,0.4)"/>
<path d="M580.40 110.30L581.67 110.17L583.00 109.82L584.42 109.40L585.90 109.07L587.38 109.03L588.78 109.37L590.01 110.11L591.02 111.20L591.84 112.47L592.54 113.77L593.24 114.96L594.05 115.95L595.04 116.76L596.23 117.46L597.53 118.16L598.80 118.97L599.89 119.99L600.63 121.22L600.97 122.62L600.93 124.10L600.60 125.58L600.18 127.00L599.83 128.33L599.70 129.60L599.83 130.87L600.18 132.20L600.60 133.62L600.93 135.10L600.97 136.58L600.63 137.98L599.89 139.21L598.80 140.22L597.53 141.04L596.23 141.74L595.04 142.44L594.05 143.25L593.24 144.24L592.54 145.43L591.84 146.73L591.02 148.00L590.01 149.09L588.78 149.83L587.38 150.17L585.90 150.13L584.42 149.80L583.00 149.38L581.67 149.03L580.40 148.90L579.13 149.03L577.80 149.38L576.38 149.80L574.90 150.13L573.42 150.17L572.02 149.83L570.79 149.09L569.77 148.00L568.96 146.73L568.26 145.43L567.56 144.24L566.75 143.25L565.76 142.44L564.57 141.74L563.27 141.04L562.00 140.22L560.91 139.21L560.17 137.98L559.83 136.58L559.87 135.10L560.20 133.62L560.62 132.20L560.97 130.87L561.10 129.60L560.97 128.33L560.62 127.00L560.20 125.58L559.87 124.10L559.83 122.62L560.17 121.22L560.91 119.99L562.00 118.97L563.27 118.16L564.57 117.46L565.76 116.76L566.75 115.95L567.56 114.96L568.26 113.77L568.96 112.47L569.77 111.20L570.79 110.11L572.02 109.37L573.42 109.03L574.90 109.07L576.38 109.40L577.80 109.82L579.13 110.17L580.40 110.30Z" fill="url(#gDarkRing)" stroke="#0e0e0e" stroke-width="0.8" />
<circle cx="580.4" cy="130.1" r="15" fill="#151515"/>
<foreignObject x="566.40" y="115.60" width="28.00" height="28.00"><div style="width:28.00px;height:28.00px;border-radius:50%;background:conic-gradient(from -40deg,#f6f6f6,#a8a8a8 90deg,#f6f6f6 180deg,#a8a8a8 270deg,#f6f6f6)"></div></foreignObject>
<circle cx="580.4" cy="129.6" r="14" fill="url(#gSilver2)"/>
<line x1="580.4" y1="129.6" x2="568.88" y2="122.95" stroke="#111" stroke-width="2" />
<text x="580.6" y="168.4" font-size="11" fill="#c9cbc9" font-weight="bold" text-anchor="middle" font-family="'Liberation Sans', sans-serif" textLength="21.3" lengthAdjust="spacingAndGlyphs">RES</text>
<rect x="640.3" y="69.2" width="28.3" height="28.5" fill="#0a0a0a" rx="4" />
<rect x="642.3" y="71.2" width="24.3" height="24.5" fill="#109a14" rx="3" />
<rect x="644.3" y="73.2" width="20.3" height="20.5" fill="url(#gGreen)" rx="1.5" stroke="#3ad03c" stroke-width="0.8" />
<text x="678.7" y="79.5" font-size="11" fill="#c9cbc9" font-weight="bold" text-anchor="start" font-family="'Liberation Sans', sans-serif" textLength="27.5" lengthAdjust="spacingAndGlyphs">SELF</text>
<text x="678.7" y="92.5" font-size="11" fill="#c9cbc9" font-weight="bold" text-anchor="start" font-family="'Liberation Sans', sans-serif" textLength="23.4" lengthAdjust="spacingAndGlyphs">OSC</text>
<circle cx="646.4" cy="116.7" r="6" fill="#0e1a0e" opacity="0.6"/>
<circle cx="646.4" cy="116.7" r="5.2" fill="url(#gLedGreenOff)"/>
<text x="662" y="120.0" font-size="11" fill="#c9cbc9" font-weight="bold" text-anchor="start" font-family="'Liberation Sans', sans-serif" textLength="43.9" lengthAdjust="spacingAndGlyphs">24 type I</text>
<circle cx="646.4" cy="132.1" r="6" fill="#0e1a0e" opacity="0.6"/>
<circle cx="646.4" cy="132.1" r="5.2" fill="url(#gLedGreenOff)"/>
<text x="662" y="135.4" font-size="11" fill="#c9cbc9" font-weight="bold" text-anchor="start" font-family="'Liberation Sans', sans-serif" textLength="47" lengthAdjust="spacingAndGlyphs">24 type II</text>
<circle cx="646.4" cy="147.4" r="6" fill="#0e1a0e" opacity="0.6"/>
<circle cx="646.4" cy="147.4" r="5.4" fill="url(#gLedGreen)"/>
<text x="662" y="150.70000000000002" font-size="11" fill="#c9cbc9" font-weight="bold" text-anchor="start" font-family="'Liberation Sans', sans-serif" textLength="12.3" lengthAdjust="spacingAndGlyphs">18</text>
<circle cx="646.4" cy="162.6" r="6" fill="#0e1a0e" opacity="0.6"/>
<circle cx="646.4" cy="162.6" r="5.2" fill="url(#gLedGreenOff)"/>
<text x="662" y="165.9" font-size="11" fill="#c9cbc9" font-weight="bold" text-anchor="start" font-family="'Liberation Sans', sans-serif" textLength="12.3" lengthAdjust="spacingAndGlyphs">12</text>
<circle cx="646.4" cy="178" r="6" fill="#0e1a0e" opacity="0.6"/>
<circle cx="646.4" cy="178" r="5.2" fill="url(#gLedGreenOff)"/>
<text x="662" y="181.3" font-size="11" fill="#c9cbc9" font-weight="bold" text-anchor="start" font-family="'Liberation Sans', sans-serif" textLength="6.1" lengthAdjust="spacingAndGlyphs">6</text>
<rect x="405.5" y="194.5" width="27.4" height="27.4" fill="#0a0a0a" rx="4" />
<rect x="407.5" y="196.5" width="23.4" height="23.4" fill="#109a14" rx="3" />
<rect x="409.5" y="198.5" width="19.4" height="19.4" fill="url(#gGreen)" rx="1.5" stroke="#3ad03c" stroke-width="0.8" />
<path d="M433.6 208.5H447" fill="none" stroke="#bdbfbd" stroke-width="1.6" />
<path d="M450.5 208.5L444.5 204.8V212.2Z" fill="#bdbfbd" />
<path d="M517 208.5H508" fill="none" stroke="#bdbfbd" stroke-width="1.6" />
<path d="M504.5 208.5L510.5 204.8V212.2Z" fill="#bdbfbd" />
<path d="M465.12 220.76L461.37 224.79M461.79 216.57L457.02 219.31M459.84 211.57L454.48 212.79M459.45 206.23L453.97 205.81M460.65 201.00L455.54 198.99M463.34 196.36L459.04 192.93M467.27 192.72L464.17 188.18M472.10 190.40L470.48 185.14M477.40 189.60L477.40 184.10M482.70 190.40L484.32 185.14M487.53 192.72L490.63 188.18M491.46 196.36L495.76 192.93M494.15 201.00L499.26 198.99M495.35 206.23L500.83 205.81M494.96 211.57L500.32 212.79M493.01 216.57L497.78 219.31M489.68 220.76L493.43 224.79" fill="none" stroke="#c6c8c6" stroke-width="1.3" />
<circle cx="477.4" cy="210.1" r="16.5" fill="rgba(0,0,0,0.45)"/>
<circle cx="477.4" cy="207.6" r="15.9" fill="#242424"/>
<foreignObject x="462.40" y="192.60" width="30.00" height="30.00"><div style="width:30.00px;height:30.00px;border-radius:50%;background:conic-gradient(from -40deg,#f6f6f6,#a8a8a8 90deg,#f6f6f6 180deg,#a8a8a8 270deg,#f6f6f6)"></div></foreignObject>
<circle cx="477.4" cy="207.6" r="15" fill="url(#gSilver2)"/>
<line x1="476.71" y1="206.62" x2="469.66" y2="196.54" stroke="#111" stroke-width="2" />
<path d="M523.42 220.76L519.67 224.79M520.09 216.57L515.32 219.31M518.14 211.57L512.78 212.79M517.75 206.23L512.27 205.81M518.95 201.00L513.84 198.99M521.64 196.36L517.34 192.93M525.57 192.72L522.47 188.18M530.40 190.40L528.78 185.14M535.70 189.60L535.70 184.10M541.00 190.40L542.62 185.14M545.83 192.72L548.93 188.18M549.76 196.36L554.06 192.93M552.45 201.00L557.56 198.99M553.65 206.23L559.13 205.81M553.26 211.57L558.62 212.79M551.31 216.57L556.08 219.31M547.98 220.76L551.73 224.79" fill="none" stroke="#c6c8c6" stroke-width="1.3" />
<circle cx="535.7" cy="210.1" r="16.5" fill="rgba(0,0,0,0.45)"/>
<circle cx="535.7" cy="207.6" r="15.9" fill="#242424"/>
<foreignObject x="520.70" y="192.60" width="30.00" height="30.00"><div style="width:30.00px;height:30.00px;border-radius:50%;background:conic-gradient(from -40deg,#f6f6f6,#a8a8a8 90deg,#f6f6f6 180deg,#a8a8a8 270deg,#f6f6f6)"></div></foreignObject>
<circle cx="535.7" cy="207.6" r="15" fill="url(#gSilver2)"/>
<line x1="534.90" y1="208.49" x2="526.67" y2="217.63" stroke="#111" stroke-width="2" />
<path d="M581.32 220.76L577.57 224.79M577.99 216.57L573.22 219.31M576.04 211.57L570.68 212.79M575.65 206.23L570.17 205.81M576.85 201.00L571.74 198.99M579.54 196.36L575.24 192.93M583.47 192.72L580.37 188.18M588.30 190.40L586.68 185.14M593.60 189.60L593.60 184.10M598.90 190.40L600.52 185.14M603.73 192.72L606.83 188.18M607.66 196.36L611.96 192.93M610.35 201.00L615.46 198.99M611.55 206.23L617.03 205.81M611.16 211.57L616.52 212.79M609.21 216.57L613.98 219.31M605.88 220.76L609.63 224.79" fill="none" stroke="#c6c8c6" stroke-width="1.3" />
<circle cx="593.6" cy="210.1" r="16.5" fill="rgba(0,0,0,0.45)"/>
<circle cx="593.6" cy="207.6" r="15.9" fill="#242424"/>
<foreignObject x="578.60" y="192.60" width="30.00" height="30.00"><div style="width:30.00px;height:30.00px;border-radius:50%;background:conic-gradient(from -40deg,#f6f6f6,#a8a8a8 90deg,#f6f6f6 180deg,#a8a8a8 270deg,#f6f6f6)"></div></foreignObject>
<circle cx="593.6" cy="207.6" r="15" fill="url(#gSilver2)"/>
<line x1="592.80" y1="208.49" x2="584.57" y2="217.63" stroke="#111" stroke-width="2" />
<rect x="638.6" y="193.5" width="30" height="29" fill="#0e0e0e" rx="5" />
<rect x="640.6" y="195.5" width="26" height="25" fill="url(#gGrayBtnR)" rx="4" />
<text x="417.4" y="240" font-size="11" fill="#c9cbc9" font-weight="bold" text-anchor="middle" font-family="'Liberation Sans', sans-serif" textLength="18" lengthAdjust="spacingAndGlyphs">INV</text>
<text x="476.5" y="240" font-size="11" fill="#c9cbc9" font-weight="bold" text-anchor="middle" font-family="'Liberation Sans', sans-serif" textLength="22.2" lengthAdjust="spacingAndGlyphs">ENV</text>
<text x="537.6" y="240" font-size="11" fill="#c9cbc9" font-weight="bold" text-anchor="middle" font-family="'Liberation Sans', sans-serif" textLength="20.2" lengthAdjust="spacingAndGlyphs">VEL</text>
<text x="595.7" y="240" font-size="11" fill="#c9cbc9" font-weight="bold" text-anchor="middle" font-family="'Liberation Sans', sans-serif" textLength="24" lengthAdjust="spacingAndGlyphs">KBD</text>
<text x="656" y="240" font-size="11" fill="#c9cbc9" font-weight="bold" text-anchor="middle" font-family="'Liberation Sans', sans-serif" textLength="33" lengthAdjust="spacingAndGlyphs">MODE</text>
<rect x="390.5" y="430.3" width="364" height="203.5" fill="#0c0d0d" />
<rect x="392.8" y="432.6" width="359.4" height="199" fill="url(#pBrushF)" />
<rect x="397" y="437.3" width="25" height="19" fill="url(#gDrop)" rx="0.8" stroke="#222" stroke-width="1.2" />
<path d="M403.5 443.8L415.5 443.8L409.5 450.8Z" fill="#d8d8d8" />
<text x="431" y="452.6" font-size="16" fill="#c4c6c4" font-weight="bold" text-anchor="start" font-family="'Liberation Sans', sans-serif" textLength="169" lengthAdjust="spacingAndGlyphs">Low Pass Ladder Filter</text>
<path d="M401.2 471.2H411M426.2 471.2H436M401.2 480.8H411M426.2 480.8H436M401.2 490.3H411M426.2 490.3H436M401.2 499.9H411M426.2 499.9H436M401.2 509.4H411M426.2 509.4H436M401.2 519.0H411M426.2 519.0H436M401.2 528.5H411M426.2 528.5H436M401.2 538.0H411M426.2 538.0H436M401.2 547.6H411M426.2 547.6H436" fill="none" stroke="#a9abaa" stroke-width="1.5" />
<rect x="417.2" y="467.5" width="3.8" height="83.7" fill="#050505" />
<rect x="404.5" y="488.8" width="27.5" height="14" rx="2" fill="rgba(0,0,0,0.45)"/>
<rect x="404.5" y="486.8" width="27.5" height="14.3" fill="url(#gHandle2)" rx="2" />
<text x="418.6" y="566.0" font-size="11" fill="#c9cbc9" font-weight="bold" text-anchor="middle" font-family="'Liberation Sans', sans-serif" textLength="32.5" lengthAdjust="spacingAndGlyphs">DRIVE</text>
<path d="M479.40 531.81L474.97 536.56M475.40 527.25L470.11 531.03M472.37 521.99L466.44 524.65M470.45 516.23L464.11 517.67M469.71 510.21L463.21 510.36M470.17 504.16L463.77 503.02M471.82 498.32L465.77 495.94M474.60 492.93L469.14 489.39M478.38 488.19L473.73 483.64M483.03 484.29L479.38 478.92M488.36 481.39L485.84 475.40M494.16 479.60L492.88 473.23M500.20 479.00L500.20 472.50M506.24 479.60L507.52 473.23M512.04 481.39L514.56 475.40M517.37 484.29L521.02 478.92M522.02 488.19L526.67 483.64M525.80 492.93L531.26 489.39M528.58 498.32L534.63 495.94M530.23 504.16L536.63 503.02M530.69 510.21L537.19 510.36M529.95 516.23L536.29 517.67M528.03 521.99L533.96 524.65M525.00 527.25L530.29 531.03M521.00 531.81L525.43 536.56" fill="none" stroke="#c6c8c6" stroke-width="1.35" />
<circle cx="500.2" cy="512.0" r="28.8" fill="rgba(0,0,0,0.4)"/>
<path d="M500.20 484.30L501.86 484.18L503.57 483.87L505.37 483.51L507.23 483.28L509.08 483.34L510.84 483.82L512.42 484.72L513.77 485.99L514.92 487.47L515.94 488.99L516.93 490.42L518.02 491.68L519.28 492.77L520.71 493.76L522.23 494.78L523.71 495.93L524.98 497.28L525.88 498.86L526.36 500.62L526.42 502.47L526.19 504.33L525.83 506.13L525.52 507.84L525.40 509.50L525.52 511.16L525.83 512.87L526.19 514.67L526.42 516.53L526.36 518.38L525.88 520.14L524.98 521.72L523.71 523.08L522.23 524.22L520.71 525.24L519.28 526.23L518.02 527.32L516.93 528.58L515.94 530.01L514.92 531.53L513.77 533.01L512.42 534.28L510.84 535.18L509.08 535.66L507.23 535.72L505.37 535.49L503.57 535.13L501.86 534.82L500.20 534.70L498.54 534.82L496.83 535.13L495.03 535.49L493.17 535.72L491.32 535.66L489.56 535.18L487.98 534.28L486.62 533.01L485.48 531.53L484.46 530.01L483.47 528.58L482.38 527.32L481.12 526.23L479.69 525.24L478.17 524.22L476.69 523.08L475.42 521.72L474.52 520.14L474.04 518.38L473.98 516.53L474.21 514.67L474.57 512.87L474.88 511.16L475.00 509.50L474.88 507.84L474.57 506.13L474.21 504.33L473.98 502.47L474.04 500.62L474.52 498.86L475.42 497.28L476.69 495.93L478.17 494.78L479.69 493.76L481.12 492.77L482.38 491.68L483.47 490.42L484.46 488.99L485.48 487.47L486.62 485.99L487.98 484.72L489.56 483.82L491.32 483.34L493.17 483.28L495.03 483.51L496.83 483.87L498.54 484.18L500.20 484.30Z" fill="url(#gDarkRing)" stroke="#0e0e0e" stroke-width="0.8" />
<circle cx="500.2" cy="510.0" r="19" fill="#151515"/>
<foreignObject x="482.20" y="491.50" width="36.00" height="36.00"><div style="width:36.00px;height:36.00px;border-radius:50%;background:conic-gradient(from -40deg,#f6f6f6,#a8a8a8 90deg,#f6f6f6 180deg,#a8a8a8 270deg,#f6f6f6)"></div></foreignObject>
<circle cx="500.2" cy="509.5" r="18" fill="url(#gSilver2)"/>
<line x1="500.2" y1="509.5" x2="488.32" y2="521.80" stroke="#111" stroke-width="2" />
<text x="498.6" y="555.1" font-size="11" fill="#c9cbc9" font-weight="bold" text-anchor="middle" font-family="'Liberation Sans', sans-serif" textLength="28.8" lengthAdjust="spacingAndGlyphs">FREQ</text>
<path d="M563.35 529.68L559.60 533.71M559.50 525.13L554.91 528.15M556.85 519.79L551.67 521.63M555.53 513.97L550.06 514.54M555.63 508.01L550.18 507.26M557.14 502.24L552.02 500.22M559.97 496.99L555.48 493.82M563.97 492.56L560.35 488.42M568.90 489.20L566.36 484.32M574.48 487.11L573.18 481.77M580.40 486.40L580.40 480.90M586.32 487.11L587.62 481.77M591.90 489.20L594.44 484.32M596.83 492.56L600.45 488.42M600.83 496.99L605.32 493.82M603.66 502.24L608.78 500.22M605.17 508.01L610.62 507.26M605.27 513.97L610.74 514.54M603.95 519.79L609.13 521.63M601.30 525.13L605.89 528.15M597.45 529.68L601.20 533.71" fill="none" stroke="#c6c8c6" stroke-width="1.35" />
<circle cx="580.4" cy="513.9" r="22.9" fill="rgba(0,0,0,0.4)"/>
<path d="M580.40 492.10L581.67 491.97L583.00 491.62L584.42 491.20L585.90 490.87L587.38 490.83L588.78 491.17L590.01 491.91L591.02 493.00L591.84 494.27L592.54 495.57L593.24 496.76L594.05 497.75L595.04 498.56L596.23 499.26L597.53 499.96L598.80 500.77L599.89 501.79L600.63 503.02L600.97 504.42L600.93 505.90L600.60 507.38L600.18 508.80L599.83 510.13L599.70 511.40L599.83 512.67L600.18 514.00L600.60 515.42L600.93 516.90L600.97 518.38L600.63 519.78L599.89 521.01L598.80 522.02L597.53 522.84L596.23 523.54L595.04 524.24L594.05 525.05L593.24 526.04L592.54 527.23L591.84 528.53L591.02 529.80L590.01 530.89L588.78 531.63L587.38 531.97L585.90 531.93L584.42 531.60L583.00 531.18L581.67 530.83L580.40 530.70L579.13 530.83L577.80 531.18L576.38 531.60L574.90 531.93L573.42 531.97L572.02 531.63L570.79 530.89L569.77 529.80L568.96 528.53L568.26 527.23L567.56 526.04L566.75 525.05L565.76 524.24L564.57 523.54L563.27 522.84L562.00 522.02L560.91 521.01L560.17 519.78L559.83 518.38L559.87 516.90L560.20 515.42L560.62 514.00L560.97 512.67L561.10 511.40L560.97 510.13L560.62 508.80L560.20 507.38L559.87 505.90L559.83 504.42L560.17 503.02L560.91 501.79L562.00 500.77L563.27 499.96L564.57 499.26L565.76 498.56L566.75 497.75L567.56 496.76L568.26 495.57L568.96 494.27L569.77 493.00L570.79 491.91L572.02 491.17L573.42 490.83L574.90 490.87L576.38 491.20L577.80 491.62L579.13 491.97L580.40 492.10Z" fill="url(#gDarkRing)" stroke="#0e0e0e" stroke-width="0.8" />
<circle cx="580.4" cy="511.9" r="15" fill="#151515"/>
<foreignObject x="566.40" y="497.40" width="28.00" height="28.00"><div style="width:28.00px;height:28.00px;border-radius:50%;background:conic-gradient(from -40deg,#f6f6f6,#a8a8a8 90deg,#f6f6f6 180deg,#a8a8a8 270deg,#f6f6f6)"></div></foreignObject>
<circle cx="580.4" cy="511.4" r="14" fill="url(#gSilver2)"/>
<line x1="580.4" y1="511.4" x2="568.88" y2="504.75" stroke="#111" stroke-width="2" />
<text x="580.6" y="550.2" font-size="11" fill="#c9cbc9" font-weight="bold" text-anchor="middle" font-family="'Liberation Sans', sans-serif" textLength="21.3" lengthAdjust="spacingAndGlyphs">RES</text>
<rect x="640.3" y="451.0" width="28.3" height="28.5" fill="#0a0a0a" rx="4" />
<rect x="642.3" y="453.0" width="24.3" height="24.5" fill="#109a14" rx="3" />
<rect x="644.3" y="455.0" width="20.3" height="20.5" fill="url(#gGreen)" rx="1.5" stroke="#3ad03c" stroke-width="0.8" />
<text x="678.7" y="461.3" font-size="11" fill="#c9cbc9" font-weight="bold" text-anchor="start" font-family="'Liberation Sans', sans-serif" textLength="27.5" lengthAdjust="spacingAndGlyphs">SELF</text>
<text x="678.7" y="474.3" font-size="11" fill="#c9cbc9" font-weight="bold" text-anchor="start" font-family="'Liberation Sans', sans-serif" textLength="23.4" lengthAdjust="spacingAndGlyphs">OSC</text>
<circle cx="646.4" cy="498.5" r="6" fill="#0e1a0e" opacity="0.6"/>
<circle cx="646.4" cy="498.5" r="5.2" fill="url(#gLedGreenOff)"/>
<text x="662" y="501.8" font-size="11" fill="#c9cbc9" font-weight="bold" text-anchor="start" font-family="'Liberation Sans', sans-serif" textLength="43.9" lengthAdjust="spacingAndGlyphs">24 type I</text>
<circle cx="646.4" cy="513.9" r="6" fill="#0e1a0e" opacity="0.6"/>
<circle cx="646.4" cy="513.9" r="5.2" fill="url(#gLedGreenOff)"/>
<text x="662" y="517.2" font-size="11" fill="#c9cbc9" font-weight="bold" text-anchor="start" font-family="'Liberation Sans', sans-serif" textLength="47" lengthAdjust="spacingAndGlyphs">24 type II</text>
<circle cx="646.4" cy="529.2" r="6" fill="#0e1a0e" opacity="0.6"/>
<circle cx="646.4" cy="529.2" r="5.4" fill="url(#gLedGreen)"/>
<text x="662" y="532.5" font-size="11" fill="#c9cbc9" font-weight="bold" text-anchor="start" font-family="'Liberation Sans', sans-serif" textLength="12.3" lengthAdjust="spacingAndGlyphs">18</text>
<circle cx="646.4" cy="544.4" r="6" fill="#0e1a0e" opacity="0.6"/>
<circle cx="646.4" cy="544.4" r="5.2" fill="url(#gLedGreenOff)"/>
<text x="662" y="547.7" font-size="11" fill="#c9cbc9" font-weight="bold" text-anchor="start" font-family="'Liberation Sans', sans-serif" textLength="12.3" lengthAdjust="spacingAndGlyphs">12</text>
<circle cx="646.4" cy="559.8" r="6" fill="#0e1a0e" opacity="0.6"/>
<circle cx="646.4" cy="559.8" r="5.2" fill="url(#gLedGreenOff)"/>
<text x="662" y="563.1" font-size="11" fill="#c9cbc9" font-weight="bold" text-anchor="start" font-family="'Liberation Sans', sans-serif" textLength="6.1" lengthAdjust="spacingAndGlyphs">6</text>
<rect x="405.5" y="576.3" width="27.4" height="27.4" fill="#0a0a0a" rx="4" />
<rect x="407.5" y="578.3" width="23.4" height="23.4" fill="#109a14" rx="3" />
<rect x="409.5" y="580.3" width="19.4" height="19.4" fill="url(#gGreen)" rx="1.5" stroke="#3ad03c" stroke-width="0.8" />
<path d="M433.6 590.3H447" fill="none" stroke="#bdbfbd" stroke-width="1.6" />
<path d="M450.5 590.3L444.5 586.6V594.0Z" fill="#bdbfbd" />
<path d="M517 590.3H508" fill="none" stroke="#bdbfbd" stroke-width="1.6" />
<path d="M504.5 590.3L510.5 586.6V594.0Z" fill="#bdbfbd" />
<path d="M465.12 602.56L461.37 606.59M461.79 598.37L457.02 601.11M459.84 593.37L454.48 594.59M459.45 588.03L453.97 587.61M460.65 582.80L455.54 580.79M463.34 578.16L459.04 574.73M467.27 574.52L464.17 569.98M472.10 572.20L470.48 566.94M477.40 571.40L477.40 565.90M482.70 572.20L484.32 566.94M487.53 574.52L490.63 569.98M491.46 578.16L495.76 574.73M494.15 582.80L499.26 580.79M495.35 588.03L500.83 587.61M494.96 593.37L500.32 594.59M493.01 598.37L497.78 601.11M489.68 602.56L493.43 606.59" fill="none" stroke="#c6c8c6" stroke-width="1.3" />
<circle cx="477.4" cy="591.9" r="16.5" fill="rgba(0,0,0,0.45)"/>
<circle cx="477.4" cy="589.4" r="15.9" fill="#242424"/>
<foreignObject x="462.40" y="574.40" width="30.00" height="30.00"><div style="width:30.00px;height:30.00px;border-radius:50%;background:conic-gradient(from -40deg,#f6f6f6,#a8a8a8 90deg,#f6f6f6 180deg,#a8a8a8 270deg,#f6f6f6)"></div></foreignObject>
<circle cx="477.4" cy="589.4" r="15" fill="url(#gSilver2)"/>
<line x1="476.71" y1="588.42" x2="469.66" y2="578.34" stroke="#111" stroke-width="2" />
<path d="M523.42 602.56L519.67 606.59M520.09 598.37L515.32 601.11M518.14 593.37L512.78 594.59M517.75 588.03L512.27 587.61M518.95 582.80L513.84 580.79M521.64 578.16L517.34 574.73M525.57 574.52L522.47 569.98M530.40 572.20L528.78 566.94M535.70 571.40L535.70 565.90M541.00 572.20L542.62 566.94M545.83 574.52L548.93 569.98M549.76 578.16L554.06 574.73M552.45 582.80L557.56 580.79M553.65 588.03L559.13 587.61M553.26 593.37L558.62 594.59M551.31 598.37L556.08 601.11M547.98 602.56L551.73 606.59" fill="none" stroke="#c6c8c6" stroke-width="1.3" />
<circle cx="535.7" cy="591.9" r="16.5" fill="rgba(0,0,0,0.45)"/>
<circle cx="535.7" cy="589.4" r="15.9" fill="#242424"/>
<foreignObject x="520.70" y="574.40" width="30.00" height="30.00"><div style="width:30.00px;height:30.00px;border-radius:50%;background:conic-gradient(from -40deg,#f6f6f6,#a8a8a8 90deg,#f6f6f6 180deg,#a8a8a8 270deg,#f6f6f6)"></div></foreignObject>
<circle cx="535.7" cy="589.4" r="15" fill="url(#gSilver2)"/>
<line x1="534.90" y1="590.29" x2="526.67" y2="599.43" stroke="#111" stroke-width="2" />
<path d="M581.32 602.56L577.57 606.59M577.99 598.37L573.22 601.11M576.04 593.37L570.68 594.59M575.65 588.03L570.17 587.61M576.85 582.80L571.74 580.79M579.54 578.16L575.24 574.73M583.47 574.52L580.37 569.98M588.30 572.20L586.68 566.94M593.60 571.40L593.60 565.90M598.90 572.20L600.52 566.94M603.73 574.52L606.83 569.98M607.66 578.16L611.96 574.73M610.35 582.80L615.46 580.79M611.55 588.03L617.03 587.61M611.16 593.37L616.52 594.59M609.21 598.37L613.98 601.11M605.88 602.56L609.63 606.59" fill="none" stroke="#c6c8c6" stroke-width="1.3" />
<circle cx="593.6" cy="591.9" r="16.5" fill="rgba(0,0,0,0.45)"/>
<circle cx="593.6" cy="589.4" r="15.9" fill="#242424"/>
<foreignObject x="578.60" y="574.40" width="30.00" height="30.00"><div style="width:30.00px;height:30.00px;border-radius:50%;background:conic-gradient(from -40deg,#f6f6f6,#a8a8a8 90deg,#f6f6f6 180deg,#a8a8a8 270deg,#f6f6f6)"></div></foreignObject>
<circle cx="593.6" cy="589.4" r="15" fill="url(#gSilver2)"/>
<line x1="592.80" y1="590.29" x2="584.57" y2="599.43" stroke="#111" stroke-width="2" />
<rect x="638.6" y="575.3" width="30" height="29" fill="#0e0e0e" rx="5" />
<rect x="640.6" y="577.3" width="26" height="25" fill="url(#gGrayBtnR)" rx="4" />
<text x="417.4" y="621.8" font-size="11" fill="#c9cbc9" font-weight="bold" text-anchor="middle" font-family="'Liberation Sans', sans-serif" textLength="18" lengthAdjust="spacingAndGlyphs">INV</text>
<text x="476.5" y="621.8" font-size="11" fill="#c9cbc9" font-weight="bold" text-anchor="middle" font-family="'Liberation Sans', sans-serif" textLength="22.2" lengthAdjust="spacingAndGlyphs">ENV</text>
<text x="537.6" y="621.8" font-size="11" fill="#c9cbc9" font-weight="bold" text-anchor="middle" font-family="'Liberation Sans', sans-serif" textLength="20.2" lengthAdjust="spacingAndGlyphs">VEL</text>
<text x="595.7" y="621.8" font-size="11" fill="#c9cbc9" font-weight="bold" text-anchor="middle" font-family="'Liberation Sans', sans-serif" textLength="24" lengthAdjust="spacingAndGlyphs">KBD</text>
<text x="656" y="621.8" font-size="11" fill="#c9cbc9" font-weight="bold" text-anchor="middle" font-family="'Liberation Sans', sans-serif" textLength="33" lengthAdjust="spacingAndGlyphs">MODE</text>
<rect x="394.7" y="272.7" width="165.1" height="120" fill="url(#pBrushM)" rx="6" />
<text x="405.4" y="292.8" font-size="15" fill="#c4c6c4" font-weight="bold" text-anchor="start" font-family="'Liberation Sans', sans-serif" textLength="40.5" lengthAdjust="spacingAndGlyphs">Mixer</text>
<path d="M417.47 346.19L413.72 350.21M413.52 341.38L408.85 344.27M410.97 335.70L405.70 337.26M410.01 329.55L404.51 329.67M410.69 323.36L405.35 322.04M412.97 317.57L408.16 314.89M416.69 312.58L412.76 308.73M421.59 308.74L418.81 304.00M427.33 306.32L425.89 301.02M433.50 305.50L433.50 300.00M439.67 306.32L441.11 301.02M445.41 308.74L448.19 304.00M450.31 312.58L454.24 308.73M454.03 317.57L458.84 314.89M456.31 323.36L461.65 322.04M456.99 329.55L462.49 329.67M456.03 335.70L461.30 337.26M453.48 341.38L458.15 344.27M449.53 346.19L453.28 350.21" fill="none" stroke="#c6c8c6" stroke-width="1.35" />
<circle cx="433.5" cy="331.5" r="23" fill="rgba(0,0,0,0.4)"/>
<path d="M433.50 309.60L434.78 309.47L436.12 309.12L437.54 308.70L439.03 308.38L440.52 308.33L441.92 308.67L443.15 309.43L444.18 310.51L445.00 311.79L445.71 313.09L446.41 314.28L447.22 315.28L448.22 316.09L449.41 316.79L450.71 317.50L451.99 318.32L453.07 319.35L453.83 320.58L454.17 321.98L454.12 323.47L453.80 324.96L453.38 326.38L453.03 327.72L452.90 329.00L453.03 330.28L453.38 331.62L453.80 333.04L454.12 334.53L454.17 336.02L453.83 337.42L453.07 338.65L451.99 339.68L450.71 340.50L449.41 341.21L448.22 341.91L447.22 342.72L446.41 343.72L445.71 344.91L445.00 346.21L444.18 347.49L443.15 348.57L441.92 349.33L440.52 349.67L439.03 349.62L437.54 349.30L436.12 348.88L434.78 348.53L433.50 348.40L432.22 348.53L430.88 348.88L429.46 349.30L427.97 349.62L426.48 349.67L425.08 349.33L423.85 348.57L422.82 347.49L422.00 346.21L421.29 344.91L420.59 343.72L419.78 342.72L418.78 341.91L417.59 341.21L416.29 340.50L415.01 339.68L413.93 338.65L413.17 337.42L412.83 336.02L412.88 334.53L413.20 333.04L413.62 331.62L413.97 330.28L414.10 329.00L413.97 327.72L413.62 326.38L413.20 324.96L412.88 323.47L412.83 321.98L413.17 320.58L413.93 319.35L415.01 318.32L416.29 317.50L417.59 316.79L418.78 316.09L419.78 315.28L420.59 314.28L421.29 313.09L422.00 311.79L422.82 310.51L423.85 309.43L425.08 308.67L426.48 308.33L427.97 308.38L429.46 308.70L430.88 309.12L432.22 309.47L433.50 309.60Z" fill="url(#gDarkRing)" stroke="#0e0e0e" stroke-width="0.8" />
<circle cx="433.5" cy="329.5" r="15.3" fill="#151515"/>
<foreignObject x="419.20" y="314.70" width="28.60" height="28.60"><div style="width:28.60px;height:28.60px;border-radius:50%;background:conic-gradient(from -40deg,#f6f6f6,#a8a8a8 90deg,#f6f6f6 180deg,#a8a8a8 270deg,#f6f6f6)"></div></foreignObject>
<circle cx="433.5" cy="329" r="14.3" fill="url(#gSilver2)"/>
<line x1="433.5" y1="329" x2="433.50" y2="315.42" stroke="#111" stroke-width="2" />
<text x="435.3" y="371.5" font-size="11" fill="#c9cbc9" font-weight="bold" text-anchor="middle" font-family="'Liberation Sans', sans-serif" textLength="51.2" lengthAdjust="spacingAndGlyphs">BALANCE</text>
<text x="435.3" y="384.3" font-size="11" fill="#c9cbc9" font-weight="bold" text-anchor="middle" font-family="'Liberation Sans', sans-serif" textLength="16.5" lengthAdjust="spacingAndGlyphs">1-2</text>
<path d="M475.9 291.4H483.8M498.4 291.4H525M538.2 291.4H546.6M475.9 300.8H483.8M498.4 300.8H525M538.2 300.8H546.6M475.9 310.8H483.8M498.4 310.8H525M538.2 310.8H546.6M475.9 320.1H483.8M498.4 320.1H525M538.2 320.1H546.6M475.9 329.5H483.8M498.4 329.5H525M538.2 329.5H546.6M475.9 339.3H483.8M498.4 339.3H525M538.2 339.3H546.6M475.9 348.7H483.8M498.4 348.7H525M538.2 348.7H546.6M475.9 358H483.8M498.4 358H525M538.2 358H546.6M475.9 367.8H483.8M498.4 367.8H525M538.2 367.8H546.6" fill="none" stroke="#8c908e" stroke-width="1.4" />
<rect x="489.4" y="287.1" width="3.8" height="83.7" fill="#050505" />
<rect x="529.7" y="287.1" width="3.8" height="83.7" fill="#050505" />
<rect x="476.7" y="302" width="27.7" height="13.5" rx="2" fill="rgba(0,0,0,0.45)"/>
<rect x="476.7" y="299.9" width="27.7" height="13.3" fill="url(#gHandle2)" rx="2" />
<rect x="517.6" y="302" width="27.7" height="13.5" rx="2" fill="rgba(0,0,0,0.45)"/>
<rect x="517.6" y="299.9" width="27.7" height="13.3" fill="url(#gHandle2)" rx="2" />
<text x="491.3" y="384.3" font-size="11" fill="#c9cbc9" font-weight="bold" text-anchor="middle" font-family="'Liberation Sans', sans-serif" textLength="18" lengthAdjust="spacingAndGlyphs">1+2</text>
<text x="531.4" y="384.3" font-size="11" fill="#c9cbc9" font-weight="bold" text-anchor="middle" font-family="'Liberation Sans', sans-serif" textLength="6" lengthAdjust="spacingAndGlyphs">3</text>
<rect x="570" y="272.5" width="180.3" height="85.1" fill="url(#pBrushM)" rx="6" />
<rect x="577.1" y="278.1" width="27.5" height="28.1" fill="#0a0a0a" rx="4" />
<rect x="579.1" y="280.1" width="23.5" height="24.1" fill="#109a14" rx="3" />
<rect x="581.1" y="282.1" width="19.5" height="20.1" fill="url(#gGreen)" rx="1.5" stroke="#3ad03c" stroke-width="0.8" />
<text x="616" y="292.4" font-size="15" fill="#c4c6c4" font-weight="bold" text-anchor="start" font-family="'Liberation Sans', sans-serif" textLength="52.5" lengthAdjust="spacingAndGlyphs">Shaper</text>
<rect x="581.7" y="313.8" width="94.9" height="34" fill="#0a0f0a" />
<rect x="583" y="315" width="92.3" height="31.6" fill="url(#gLcdDark)" />
<text x="628" y="334.8" font-size="13.5" fill="#3ee03a" font-weight="normal" text-anchor="middle" font-family="'Liberation Sans', sans-serif" textLength="48.5" lengthAdjust="spacingAndGlyphs">Hard Clip</text>
<path d="M697.27 325.89L693.52 329.91M693.32 321.08L688.65 323.97M690.77 315.40L685.50 316.96M689.81 309.25L684.31 309.37M690.49 303.06L685.15 301.74M692.77 297.27L687.96 294.59M696.49 292.28L692.56 288.43M701.39 288.44L698.61 283.70M707.13 286.02L705.69 280.72M713.30 285.20L713.30 279.70M719.47 286.02L720.91 280.72M725.21 288.44L727.99 283.70M730.11 292.28L734.04 288.43M733.83 297.27L738.64 294.59M736.11 303.06L741.45 301.74M736.79 309.25L742.29 309.37M735.83 315.40L741.10 316.96M733.28 321.08L737.95 323.97M729.33 325.89L733.08 329.91" fill="none" stroke="#c6c8c6" stroke-width="1.35" />
<circle cx="713.3" cy="311.2" r="22.7" fill="rgba(0,0,0,0.4)"/>
<path d="M713.30 289.60L714.56 289.47L715.88 289.12L717.28 288.69L718.75 288.37L720.22 288.32L721.60 288.65L722.82 289.39L723.82 290.47L724.63 291.74L725.32 293.03L726.01 294.21L726.81 295.19L727.79 295.99L728.97 296.68L730.26 297.37L731.53 298.18L732.61 299.18L733.35 300.40L733.68 301.78L733.63 303.25L733.31 304.72L732.88 306.12L732.53 307.44L732.40 308.70L732.53 309.96L732.88 311.28L733.31 312.68L733.63 314.15L733.68 315.62L733.35 317.00L732.61 318.22L731.53 319.22L730.26 320.03L728.97 320.72L727.79 321.41L726.81 322.21L726.01 323.19L725.32 324.37L724.63 325.66L723.82 326.93L722.82 328.01L721.60 328.75L720.22 329.08L718.75 329.03L717.28 328.71L715.88 328.28L714.56 327.93L713.30 327.80L712.04 327.93L710.72 328.28L709.32 328.71L707.85 329.03L706.38 329.08L705.00 328.75L703.78 328.01L702.77 326.93L701.97 325.66L701.28 324.37L700.59 323.19L699.79 322.21L698.81 321.41L697.63 320.72L696.34 320.03L695.07 319.23L693.99 318.22L693.25 317.00L692.92 315.62L692.97 314.15L693.29 312.68L693.72 311.28L694.07 309.96L694.20 308.70L694.07 307.44L693.72 306.12L693.29 304.72L692.97 303.25L692.92 301.78L693.25 300.40L693.99 299.18L695.07 298.18L696.34 297.37L697.63 296.68L698.81 295.99L699.79 295.19L700.59 294.21L701.28 293.03L701.97 291.74L702.77 290.47L703.78 289.39L705.00 288.65L706.38 288.32L707.85 288.37L709.32 288.69L710.72 289.12L712.04 289.47L713.30 289.60Z" fill="url(#gDarkRing)" stroke="#0e0e0e" stroke-width="0.8" />
<circle cx="713.3" cy="309.2" r="15.3" fill="#151515"/>
<foreignObject x="699.00" y="294.40" width="28.60" height="28.60"><div style="width:28.60px;height:28.60px;border-radius:50%;background:conic-gradient(from -40deg,#f6f6f6,#a8a8a8 90deg,#f6f6f6 180deg,#a8a8a8 270deg,#f6f6f6)"></div></foreignObject>
<circle cx="713.3" cy="308.7" r="14.3" fill="url(#gSilver2)"/>
<line x1="713.3" y1="308.7" x2="713.30" y2="295.12" stroke="#111" stroke-width="2" />
<text x="714.1" y="348.4" font-size="11" fill="#c9cbc9" font-weight="bold" text-anchor="middle" font-family="'Liberation Sans', sans-serif" textLength="32.6" lengthAdjust="spacingAndGlyphs">DRIVE</text>
<path d="M32.6 189.4V202.3H44" fill="none" stroke="#a7a9a6" stroke-width="2.4" />
<path d="M51.4 202.3L42.4 198.5L42.4 206.10000000000002Z" fill="#a7a9a6" />
<path d="M54.5 221.1H8.6V461.5H54.5" fill="none" stroke="#a7a9a6" stroke-width="2.4" />
<path d="M18.5 221.1L27.5 217.29999999999998L27.5 224.9Z" fill="#a7a9a6" />
<path d="M8.6 265.7H54.5" fill="none" stroke="#a7a9a6" stroke-width="2.4" />
<path d="M332 221H344.8V326.8H394.7" fill="none" stroke="#a7a9a6" stroke-width="2.4" />
<path d="M362.5 326.8L355.0 322.3L355.0 331.3Z" fill="#a7a9a6" />
<path d="M332 341.5H394.7" fill="none" stroke="#a7a9a6" stroke-width="2.4" />
<path d="M374.2 341.5L366.7 337.0L366.7 346.0Z" fill="#a7a9a6" />
<path d="M394.7 354.5H344.8V460H332" fill="none" stroke="#a7a9a6" stroke-width="2.4" />
<path d="M362.5 354.5L355.0 350.0L355.0 359.0Z" fill="#a7a9a6" />
<path d="M358.5 120V262H512.7V272.7" fill="none" stroke="#a7a9a6" stroke-width="2.4" />
<path d="M358.5 223.5L354.0 230.5L363.0 230.5Z" fill="#a7a9a6" />
<path d="M514.9 392.7V406.8H358.6V592" fill="none" stroke="#a7a9a6" stroke-width="2.4" />
<path d="M358.6 448L354.1 441L363.1 441Z" fill="#a7a9a6" />
<path d="M372.8 106.4H391" fill="none" stroke="#a7a9a6" stroke-width="2.4" />
<path d="M372.8 151.2H391" fill="none" stroke="#a7a9a6" stroke-width="2.4" />
<path d="M372.8 196H391" fill="none" stroke="#a7a9a6" stroke-width="2.4" />
<path d="M372.8 487.8H391" fill="none" stroke="#a7a9a6" stroke-width="2.4" />
<path d="M372.8 532.8H391" fill="none" stroke="#a7a9a6" stroke-width="2.4" />
<path d="M372.8 578.3H391" fill="none" stroke="#a7a9a6" stroke-width="2.4" />
<path d="M641 251.5V272.5" fill="none" stroke="#a7a9a6" stroke-width="2.4" />
<path d="M641 263.6L636.5 256.6L645.5 256.6Z" fill="#a7a9a6" />
<path d="M640.9 357.6V388.2" fill="none" stroke="#a7a9a6" stroke-width="2.4" />
<path d="M773.7 388.2H579V418.4H410.6V427" fill="none" stroke="#a7a9a6" stroke-width="2.4" />
<path d="M586.9 388.2L595.9 383.7L595.9 392.7Z" fill="#a7a9a6" />
<path d="M697.2 388.2L689.2 383.7L689.2 392.7Z" fill="#a7a9a6" />
<path d="M410.6 427.2L406.1 417.7L415.1 417.7Z" fill="#a7a9a6" />
<path d="M773.7 411.8H608.3V430.3" fill="none" stroke="#a7a9a6" stroke-width="2.4" />
<path d="M645.4 411.8L636.9 407.3L636.9 416.3Z" fill="#a7a9a6" />
<rect x="381" y="41" width="2" height="591" fill="#151515" />
<rect x="343.5" y="91.8" width="30.3" height="29.2" fill="#111" rx="4" />
<rect x="345.5" y="93.8" width="26.3" height="25.2" fill="url(#gRedBtn)" rx="3" />
<path d="M358.45 111.89999999999999V101.19999999999999H356.65Q356.45 102.89999999999999 354.45 103.6" fill="none" stroke="#15152c" stroke-width="2.4" />
<rect x="343.5" y="136.6" width="30.3" height="29.2" fill="#111" rx="4" />
<rect x="345.5" y="138.6" width="26.3" height="25.2" fill="url(#gBlueBtn)" rx="3" />
<text x="358.65" y="156.7" font-size="15" fill="#15152c" font-weight="normal" text-anchor="middle" font-family="'Liberation Sans', sans-serif" stroke="#15152c" stroke-width="0.35">2</text>
<rect x="343.5" y="181.4" width="30.3" height="29.2" fill="#111" rx="4" />
<rect x="345.5" y="183.4" width="26.3" height="25.2" fill="url(#gBlueBtn)" rx="3" />
<text x="358.65" y="201.5" font-size="15" fill="#15152c" font-weight="normal" text-anchor="middle" font-family="'Liberation Sans', sans-serif" stroke="#15152c" stroke-width="0.35">3</text>
<rect x="343.5" y="473.5" width="30.3" height="28.7" fill="#111" rx="4" />
<rect x="345.5" y="475.5" width="26.3" height="24.7" fill="url(#gBlueBtn)" rx="3" />
<path d="M358.45 493.35V482.65000000000003H356.65Q356.45 484.35 354.45 485.05" fill="none" stroke="#15152c" stroke-width="2.4" />
<rect x="343.5" y="518.6" width="30.3" height="28.7" fill="#111" rx="4" />
<rect x="345.5" y="520.6" width="26.3" height="24.7" fill="url(#gRedBtn)" rx="3" />
<text x="358.65" y="538.45" font-size="15" fill="#15152c" font-weight="normal" text-anchor="middle" font-family="'Liberation Sans', sans-serif" stroke="#15152c" stroke-width="0.35">2</text>
<rect x="343.5" y="564" width="30.3" height="28.7" fill="#111" rx="4" />
<rect x="345.5" y="566" width="26.3" height="24.7" fill="url(#gBlueBtn)" rx="3" />
<text x="358.65" y="583.85" font-size="15" fill="#15152c" font-weight="normal" text-anchor="middle" font-family="'Liberation Sans', sans-serif" stroke="#15152c" stroke-width="0.35">3</text>
<rect x="605" y="373.5" width="30.1" height="28.5" fill="#111" rx="4" />
<rect x="607" y="375.5" width="26.1" height="24.5" fill="url(#gBlueBtn)" rx="3" />
<path d="M624.55 383.15L615.55 387.75L624.55 392.35Z" fill="#15152c" />
<rect x="647.3" y="373.5" width="30.2" height="28.5" fill="#111" rx="4" />
<rect x="649.3" y="375.5" width="26.2" height="24.5" fill="url(#gRedBtn)" rx="3" />
<path d="M658.6 383.15L667.4 387.75L658.6 392.35Z" fill="#15152c" />
<rect x="690.1" y="396.2" width="30.1" height="29.4" fill="#111" rx="4" />
<rect x="692.1" y="398.2" width="26.1" height="25.4" fill="url(#gBlueBtn)" rx="3" />
<path d="M701.35 406.29999999999995L710.15 410.9L701.35 415.5Z" fill="#15152c" />
<path d="M15.7 66.3H24.3M41.4 66.3H49M15.7 75.8H24.3M41.4 75.8H49M15.7 85.3H24.3M41.4 85.3H49M15.7 94.8H24.3M41.4 94.8H49M15.7 104.3H24.3M41.4 104.3H49M15.7 113.8H24.3M41.4 113.8H49M15.7 123.3H24.3M41.4 123.3H49M15.7 132.8H24.3M41.4 132.8H49" fill="none" stroke="#737775" stroke-width="1.3" />
<rect x="31.2" y="64" width="3.8" height="73" fill="#050505" />
<rect x="18.5" y="139" width="27.5" height="13" rx="2" fill="rgba(0,0,0,0.45)"/>
<rect x="18.5" y="137" width="27.5" height="13.3" fill="url(#gHandle2)" rx="2" />
<text x="32.3" y="161.4" font-size="11" fill="#c8cac8" font-weight="bold" text-anchor="middle" font-family="'Liberation Sans', sans-serif" textLength="17" lengthAdjust="spacingAndGlyphs">AM</text>
<text x="32.1" y="173.7" font-size="11" fill="#c8cac8" font-weight="bold" text-anchor="middle" font-family="'Liberation Sans', sans-serif" textLength="31.7" lengthAdjust="spacingAndGlyphs">FROM</text>
<text x="32.1" y="184.3" font-size="11" fill="#c8cac8" font-weight="bold" text-anchor="middle" font-family="'Liberation Sans', sans-serif" textLength="28.9" lengthAdjust="spacingAndGlyphs">OSC2</text>
<rect x="18.9" y="251.7" width="29.1" height="27.3" fill="#111" rx="3.5" />
<rect x="20.6" y="253.39999999999998" width="25.7" height="23.9" fill="url(#gBlueBtn)" rx="2.5" />
<path d="M30 262.0L38.6 266.3L30 270.5Z" fill="#15152c" />
<text x="33.4" y="293.5" font-size="11" fill="#c8cac8" font-weight="bold" text-anchor="middle" font-family="'Liberation Sans', sans-serif" textLength="30.9" lengthAdjust="spacingAndGlyphs">SYNC</text>
<path d="M15.7 324.0H24.3M41.4 324.0H49M15.7 333.4H24.3M41.4 333.4H49M15.7 342.8H24.3M41.4 342.8H49M15.7 352.2H24.3M41.4 352.2H49M15.7 361.6H24.3M41.4 361.6H49M15.7 371.0H24.3M41.4 371.0H49M15.7 380.4H24.3M41.4 380.4H49M15.7 389.8H24.3M41.4 389.8H49" fill="none" stroke="#737775" stroke-width="1.3" />
<rect x="31.2" y="304" width="3.8" height="89" fill="#050505" />
<rect x="18.5" y="306" width="27.5" height="13" rx="2" fill="rgba(0,0,0,0.45)"/>
<rect x="18.5" y="304" width="27.5" height="13.5" fill="url(#gHandle2)" rx="2" />
<text x="33.2" y="406" font-size="11" fill="#c8cac8" font-weight="bold" text-anchor="middle" font-family="'Liberation Sans', sans-serif" textLength="18" lengthAdjust="spacingAndGlyphs">BW</text>
<rect x="18.9" y="448.2" width="29.1" height="27.3" fill="#111" rx="3.5" />
<rect x="20.6" y="449.9" width="25.7" height="23.9" fill="url(#gBlueBtn)" rx="2.5" />
<path d="M30 458.5L38.6 462.8L30 467.0Z" fill="#15152c" />
<text x="33.4" y="490.0" font-size="11" fill="#c8cac8" font-weight="bold" text-anchor="middle" font-family="'Liberation Sans', sans-serif" textLength="30.9" lengthAdjust="spacingAndGlyphs">SYNC</text>
<path d="M15.7 520.0H24.3M41.4 520.0H49M15.7 529.4H24.3M41.4 529.4H49M15.7 538.8H24.3M41.4 538.8H49M15.7 548.2H24.3M41.4 548.2H49M15.7 557.6H24.3M41.4 557.6H49M15.7 567.0H24.3M41.4 567.0H49M15.7 576.4H24.3M41.4 576.4H49M15.7 585.8H24.3M41.4 585.8H49" fill="none" stroke="#737775" stroke-width="1.3" />
<rect x="31.2" y="500" width="3.8" height="87.70000000000005" fill="#050505" />
<rect x="18.5" y="502" width="27.5" height="13" rx="2" fill="rgba(0,0,0,0.45)"/>
<rect x="18.5" y="500" width="27.5" height="13.5" fill="url(#gHandle2)" rx="2" />
<text x="33.2" y="600.7" font-size="11" fill="#c8cac8" font-weight="bold" text-anchor="middle" font-family="'Liberation Sans', sans-serif" textLength="18" lengthAdjust="spacingAndGlyphs">BW</text>
<rect x="760.6" y="41" width="2.8" height="601" fill="#0e0f0f" />
<rect x="763.6" y="81.4" width="80.1" height="558.6" fill="url(#pBrushR)" />
<rect x="843.7" y="41" width="4.8" height="601" fill="#121212" />
<rect x="848.5" y="81.4" width="79.1" height="558.6" fill="#867a62" />
<rect x="848.5" y="81.4" width="6" height="558.6" fill="url(#gTanEdge)" />
<rect x="927.6" y="41" width="5.4" height="601" fill="#0e0e0e" />
<rect x="763.6" y="41.9" width="80.1" height="39.5" fill="url(#gExpand)" />
<rect x="763.6" y="80.4" width="80.1" height="1" fill="#7a1010" />
<path d="M782.65 54.9L790.35 45.7H800.35L792.35 54.9L800.35 64.1H790.35Z" fill="url(#gChev)" />
<path d="M825.15 54.9L817.4499999999999 45.7H807.4499999999999L815.4499999999999 54.9L807.4499999999999 64.1H817.4499999999999Z" fill="url(#gChev)" />
<text x="803.4499999999999" y="76.2" font-size="12.3" fill="#f8f2f2" font-weight="bold" text-anchor="middle" font-family="'Liberation Sans', sans-serif" textLength="45.5" lengthAdjust="spacingAndGlyphs">EXPAND</text>
<rect x="848.5" y="41.9" width="79.1" height="39.5" fill="url(#gExpand)" />
<rect x="848.5" y="80.4" width="79.1" height="1" fill="#7a1010" />
<path d="M867.05 54.9L874.75 45.7H884.75L876.75 54.9L884.75 64.1H874.75Z" fill="url(#gChev)" />
<path d="M909.55 54.9L901.8499999999999 45.7H891.8499999999999L899.8499999999999 54.9L891.8499999999999 64.1H901.8499999999999Z" fill="url(#gChev)" />
<text x="887.8499999999999" y="76.2" font-size="12.3" fill="#f8f2f2" font-weight="bold" text-anchor="middle" font-family="'Liberation Sans', sans-serif" textLength="45.5" lengthAdjust="spacingAndGlyphs">EXPAND</text>
<text x="805.5" y="108.4" font-size="15" fill="#b3b6b4" font-weight="bold" text-anchor="middle" font-family="'Liberation Sans', sans-serif" textLength="41.5" lengthAdjust="spacingAndGlyphs">LFO 1</text>
<path d="M791.01 163.60L787.60 167.26M787.89 159.80L783.64 162.43M785.87 155.30L781.08 156.72M785.11 150.43L780.11 150.55M785.64 145.54L780.79 144.34M787.45 140.95L783.08 138.52M790.40 137.00L786.82 133.51M794.28 133.96L791.74 129.65M798.82 132.05L797.50 127.23M803.70 131.40L803.70 126.40M808.58 132.05L809.90 127.23M813.12 133.96L815.66 129.65M817.00 137.00L820.58 133.51M819.95 140.95L824.32 138.52M821.76 145.54L826.61 144.34M822.29 150.43L827.29 150.55M821.53 155.30L826.32 156.72M819.51 159.80L823.76 162.43M816.39 163.60L819.80 167.26" fill="none" stroke="#c6c8c6" stroke-width="1.3" />
<circle cx="803.7" cy="152.5" r="16.5" fill="rgba(0,0,0,0.45)"/>
<circle cx="803.7" cy="150" r="15.9" fill="#242424"/>
<foreignObject x="788.70" y="135.00" width="30.00" height="30.00"><div style="width:30.00px;height:30.00px;border-radius:50%;background:conic-gradient(from -40deg,#f6f6f6,#a8a8a8 90deg,#f6f6f6 180deg,#a8a8a8 270deg,#f6f6f6)"></div></foreignObject>
<circle cx="803.7" cy="150" r="15" fill="url(#gSilver2)"/>
<line x1="804.76" y1="149.44" x2="815.62" y2="143.66" stroke="#111" stroke-width="2" />
<text x="803.5" y="184" font-size="11" fill="#c0c2c0" font-weight="bold" text-anchor="middle" font-family="'Liberation Sans', sans-serif" textLength="27" lengthAdjust="spacingAndGlyphs">RATE</text>
<rect x="769.5" y="200.4" width="69.2" height="29.6" fill="#0a0f0a" />
<rect x="771" y="202" width="66.2" height="26.4" fill="url(#gLcdDark)" />
<path d="M790 219Q795.5 205 801.5 213.5Q807.5 223 815 211" fill="none" stroke="#52b846" stroke-width="1.2" />
<text x="804" y="247.5" font-size="11" fill="#c0c2c0" font-weight="bold" text-anchor="middle" font-family="'Liberation Sans', sans-serif" textLength="64" lengthAdjust="spacingAndGlyphs">WAVEFORM</text>
<rect x="773.6" y="271.4" width="61.9" height="162.6" fill="#6a6e6d" rx="8" />
<text x="803.8" y="292.5" font-size="15" fill="#a8acab" font-weight="bold" text-anchor="middle" font-family="'Liberation Sans', sans-serif" textLength="33" lengthAdjust="spacingAndGlyphs">Amp</text>
<path d="M790.94 362.80L787.53 366.45M787.75 358.91L783.50 361.54M785.69 354.31L780.89 355.74M784.91 349.34L779.91 349.46M785.46 344.34L780.60 343.14M787.30 339.66L782.93 337.22M790.31 335.62L786.73 332.13M794.27 332.52L791.74 328.21M798.91 330.57L797.60 325.74M803.90 329.90L803.90 324.90M808.89 330.57L810.20 325.74M813.53 332.52L816.06 328.21M817.49 335.62L821.07 332.13M820.50 339.66L824.87 337.22M822.34 344.34L827.20 343.14M822.89 349.34L827.89 349.46M822.11 354.31L826.91 355.74M820.05 358.91L824.30 361.54M816.86 362.80L820.27 366.45" fill="none" stroke="#d8dad8" stroke-width="1.3" />
<circle cx="803.9" cy="351.4" r="16.5" fill="rgba(0,0,0,0.45)"/>
<circle cx="803.9" cy="348.9" r="15.9" fill="#242424"/>
<foreignObject x="788.90" y="333.90" width="30.00" height="30.00"><div style="width:30.00px;height:30.00px;border-radius:50%;background:conic-gradient(from -40deg,#f6f6f6,#a8a8a8 90deg,#f6f6f6 180deg,#a8a8a8 270deg,#f6f6f6)"></div></foreignObject>
<circle cx="803.9" cy="348.9" r="15" fill="url(#gSilver2)"/>
<line x1="802.95" y1="349.64" x2="793.26" y2="357.21" stroke="#111" stroke-width="2" />
<text x="803.5" y="379.5" font-size="11" fill="#c8cac8" font-weight="bold" text-anchor="middle" font-family="'Liberation Sans', sans-serif" textLength="20" lengthAdjust="spacingAndGlyphs">VEL</text>
<text x="805" y="467.7" font-size="16" fill="#c4c6c4" font-weight="bold" text-anchor="middle" font-family="'Liberation Sans', sans-serif" textLength="68" lengthAdjust="spacingAndGlyphs">Envelope</text>
<text x="785.6" y="492.2" font-size="11" fill="#c4c6c4" font-weight="bold" text-anchor="middle" font-family="'Liberation Sans', sans-serif" textLength="26" lengthAdjust="spacingAndGlyphs">Filter</text>
<text x="821.9" y="492.2" font-size="11" fill="#c4c6c4" font-weight="bold" text-anchor="middle" font-family="'Liberation Sans', sans-serif" textLength="24.3" lengthAdjust="spacingAndGlyphs">Amp</text>
<path d="M771.5 508.5H779M793.5 508.5H815M829 508.5H837M771.5 518.0H779M793.5 518.0H815M829 518.0H837M771.5 527.5H779M793.5 527.5H815M829 527.5H837M771.5 537.0H779M793.5 537.0H815M829 537.0H837M771.5 546.5H779M793.5 546.5H815M829 546.5H837M771.5 556.0H779M793.5 556.0H815M829 556.0H837M771.5 565.5H779M793.5 565.5H815M829 565.5H837M771.5 575.0H779M793.5 575.0H815M829 575.0H837M771.5 584.5H779M793.5 584.5H815M829 584.5H837M771.5 594.0H779M793.5 594.0H815M829 594.0H837M771.5 603.5H779M793.5 603.5H815M829 603.5H837" fill="none" stroke="#9a9e9c" stroke-width="1.4" />
<rect x="785" y="506" width="3.8" height="107" fill="#050505" />
<rect x="819.8" y="506" width="3.8" height="107" fill="#050505" />
<rect x="772" y="584" width="28.3" height="13.6" rx="2" fill="rgba(0,0,0,0.45)"/>
<rect x="772" y="582" width="28.3" height="13.6" fill="url(#gHandle2)" rx="2" />
<rect x="808" y="592.3" width="28.3" height="13.6" rx="2" fill="rgba(0,0,0,0.45)"/>
<rect x="808" y="590.3" width="28.3" height="13.6" fill="url(#gHandle2)" rx="2" />
<text x="803" y="630" font-size="11" fill="#b8bab8" font-weight="bold" text-anchor="middle" font-family="'Liberation Sans', sans-serif" textLength="37" lengthAdjust="spacingAndGlyphs">DECAY</text>
<rect x="860" y="94" width="62.8" height="76.5" fill="#6b6354" rx="7" />
<text x="891.4" y="112.3" font-size="15" fill="#cdc9bd" font-weight="bold" text-anchor="middle" font-family="'Liberation Sans', sans-serif" textLength="40.5" lengthAdjust="spacingAndGlyphs">Delay</text>
<rect x="877.4" y="129.6" width="28.3" height="27.4" fill="#0c0c0c" rx="3.5" />
<rect x="879.2" y="131.4" width="24.7" height="23.8" fill="url(#gSkyBtn)" rx="2.5" />
<rect x="860" y="183" width="62.8" height="75.80000000000001" fill="#6b6354" rx="7" />
<text x="891.4" y="203" font-size="15" fill="#cdc9bd" font-weight="bold" text-anchor="middle" font-family="'Liberation Sans', sans-serif" textLength="52" lengthAdjust="spacingAndGlyphs">Chorus</text>
<rect x="877.4" y="217.7" width="28.3" height="27.4" fill="#0c0c0c" rx="3.5" />
<rect x="879.2" y="219.5" width="24.7" height="23.8" fill="url(#gSkyBtn)" rx="2.5" />
<rect x="858.5" y="270" width="63.5" height="163.5" fill="#141414" />
<rect x="860.5" y="272" width="59.5" height="159.5" fill="#dedac9" />
<text x="890.5" y="289.3" font-size="11" fill="#1e1e1e" font-weight="bold" text-anchor="middle" font-family="'Liberation Sans', sans-serif" textLength="27" lengthAdjust="spacingAndGlyphs">State</text>
<text x="890.5" y="299.9" font-size="11" fill="#1e1e1e" font-weight="bold" text-anchor="middle" font-family="'Liberation Sans', sans-serif" textLength="41" lengthAdjust="spacingAndGlyphs">Variable</text>
<path d="M878.69 343.15L875.47 346.99M874.45 338.10L870.12 340.60M872.19 331.90L867.26 332.77M872.19 325.30L867.26 324.43M874.45 319.10L870.12 316.60M878.69 314.05L875.47 310.21M884.40 310.75L882.69 306.05M890.90 309.60L890.90 304.60M897.40 310.75L899.11 306.05M903.11 314.05L906.33 310.21M907.35 319.10L911.68 316.60M909.61 325.30L914.54 324.43M909.61 331.90L914.54 332.77M907.35 338.10L911.68 340.60M903.11 343.15L906.33 346.99" fill="none" stroke="#3a3934" stroke-width="1.2" />
<circle cx="890.9" cy="330.6" r="17.8" fill="rgba(0,0,0,0.28)"/>
<circle cx="890.9" cy="328.6" r="17" fill="#131313"/>
<circle cx="890.9" cy="328.6" r="15" fill="url(#gBlack)"/>
<line x1="889.10" y1="329.56" x2="878.59" y2="335.14" stroke="#e4e4e4" stroke-width="3.4" stroke-linecap="butt"/>
<text x="891" y="361.6" font-size="11" fill="#1e1e1e" font-weight="bold" text-anchor="middle" font-family="'Liberation Sans', sans-serif" textLength="28" lengthAdjust="spacingAndGlyphs">FREQ</text>
<path d="M878.79 409.15L875.57 412.99M874.55 404.10L870.22 406.60M872.29 397.90L867.36 398.77M872.29 391.30L867.36 390.43M874.55 385.10L870.22 382.60M878.79 380.05L875.57 376.21M884.50 376.75L882.79 372.05M891.00 375.60L891.00 370.60M897.50 376.75L899.21 372.05M903.21 380.05L906.43 376.21M907.45 385.10L911.78 382.60M909.71 391.30L914.64 390.43M909.71 397.90L914.64 398.77M907.45 404.10L911.78 406.60M903.21 409.15L906.43 412.99" fill="none" stroke="#3a3934" stroke-width="1.2" />
<circle cx="891" cy="396.6" r="17.8" fill="rgba(0,0,0,0.28)"/>
<circle cx="891" cy="394.6" r="17" fill="#131313"/>
<circle cx="891" cy="394.6" r="15" fill="url(#gBlack)"/>
<line x1="889.83" y1="396.27" x2="883.00" y2="406.02" stroke="#e4e4e4" stroke-width="3.4" stroke-linecap="butt"/>
<text x="891" y="426" font-size="11" fill="#1e1e1e" font-weight="bold" text-anchor="middle" font-family="'Liberation Sans', sans-serif" textLength="21.5" lengthAdjust="spacingAndGlyphs">RES</text>
<text x="891.5" y="466.7" font-size="15" fill="#cdc6b6" font-weight="bold" text-anchor="middle" font-family="'Liberation Sans', sans-serif" textLength="42" lengthAdjust="spacingAndGlyphs">LFO 2</text>
<path d="M877.38 522.03L873.63 526.05M874.27 518.24L869.60 521.14M872.27 513.77L866.99 515.34M871.51 508.93L866.01 509.06M872.04 504.06L866.70 502.74M873.84 499.50L869.03 496.82M876.77 495.57L872.83 491.73M880.63 492.55L877.84 487.81M885.14 490.65L883.70 485.34M890.00 490.00L890.00 484.50M894.86 490.65L896.30 485.34M899.37 492.55L902.16 487.81M903.23 495.57L907.17 491.73M906.16 499.50L910.97 496.82M907.96 504.06L913.30 502.74M908.49 508.93L913.99 509.06M907.73 513.77L913.01 515.34M905.73 518.24L910.40 521.14M902.62 522.03L906.37 526.05" fill="none" stroke="#e8e2d4" stroke-width="1.3" />
<circle cx="890" cy="511.0" r="17.0" fill="rgba(0,0,0,0.45)"/>
<circle cx="890" cy="508.5" r="16.4" fill="#242424"/>
<foreignObject x="874.50" y="493.00" width="31.00" height="31.00"><div style="width:31.00px;height:31.00px;border-radius:50%;background:conic-gradient(from -40deg,#f6f6f6,#a8a8a8 90deg,#f6f6f6 180deg,#a8a8a8 270deg,#f6f6f6)"></div></foreignObject>
<circle cx="890" cy="508.5" r="15.5" fill="url(#gSilver2)"/>
<line x1="889.34" y1="507.45" x2="882.61" y2="496.67" stroke="#111" stroke-width="2" />
<text x="890.5" y="543" font-size="11" fill="#d6d0c2" font-weight="bold" text-anchor="middle" font-family="'Liberation Sans', sans-serif" textLength="27" lengthAdjust="spacingAndGlyphs">RATE</text>
<rect x="856.3" y="560.4" width="68.2" height="30.6" fill="#0a0f0a" />
<rect x="857.8" y="562" width="65.2" height="27.4" fill="url(#gLcdDark)" />
<path d="M872 580L884 568.5L900 583L913 570" fill="none" stroke="#52b846" stroke-width="1.1" />
<text x="890.5" y="607.3" font-size="11" fill="#d6d0c2" font-weight="bold" text-anchor="middle" font-family="'Liberation Sans', sans-serif" textLength="64" lengthAdjust="spacingAndGlyphs">WAVEFORM</text>
<rect x="54.5" y="632.8" width="706" height="8.5" fill="#2c302f" />
<rect x="54.5" y="632" width="277.5" height="1.5" fill="#121212" />
<path d="M760 388.2H773.7M760 411.8H773.7" fill="none" stroke="#a7a9a6" stroke-width="2.4" />
<rect x="0" y="641.3" width="933" height="58.7" fill="#bcb4aa" />
<rect x="0" y="641.3" width="933" height="1.2" fill="#d6d0c8" />
<rect x="7.5" y="672.8" width="47" height="20.5" fill="#f8f6f2" rx="3" />
<rect x="58.7" y="672.8" width="47" height="20.5" fill="#f8f6f2" rx="3" />
<rect x="110.0" y="672.8" width="47" height="20.5" fill="#f8f6f2" rx="3" />
<rect x="161.2" y="672.8" width="47" height="20.5" fill="#f8f6f2" rx="3" />
<rect x="212.5" y="672.8" width="47" height="20.5" fill="#cfc8bf" rx="3" />
<rect x="263.7" y="672.8" width="47" height="20.5" fill="#cfc8bf" rx="3" />
<rect x="314.9" y="672.8" width="47" height="20.5" fill="#f8f6f2" rx="3" />
<circle cx="338.4" cy="682.5" r="3.2" fill="#8a847c"/>
<rect x="366.2" y="672.8" width="47" height="20.5" fill="#f8f6f2" rx="3" />
<rect x="417.4" y="672.8" width="47" height="20.5" fill="#f8f6f2" rx="3" />
<rect x="468.7" y="672.8" width="47" height="20.5" fill="#f8f6f2" rx="3" />
<rect x="519.9" y="672.8" width="47" height="20.5" fill="#f8f6f2" rx="3" />
<rect x="571.1" y="672.8" width="47" height="20.5" fill="#cfc8bf" rx="3" />
<rect x="622.4" y="672.8" width="47" height="20.5" fill="#cfc8bf" rx="3" />
<rect x="673.6" y="672.8" width="47" height="20.5" fill="#f8f6f2" rx="3" />
<circle cx="697.1" cy="682.5" r="3.2" fill="#8a847c"/>
<rect x="724.9" y="672.8" width="47" height="20.5" fill="#f8f6f2" rx="3" />
<rect x="776.1" y="672.8" width="47" height="20.5" fill="#f8f6f2" rx="3" />
<rect x="827.3" y="672.8" width="47" height="20.5" fill="#f8f6f2" rx="3" />
<rect x="878.6" y="672.8" width="47" height="20.5" fill="#f8f6f2" rx="3" />
<clipPath id="kbclip"><rect x="6" y="640" width="921" height="40"/></clipPath>
<g clip-path="url(#kbclip)">
<rect x="-18.3" y="649" width="46.6" height="19.8" fill="#9d978f" rx="3" />
<rect x="32.9" y="649" width="46.6" height="19.8" fill="#9d978f" rx="3" />
<rect x="135.4" y="649" width="46.6" height="19.8" fill="#9d978f" rx="3" />
<rect x="186.7" y="649" width="46.6" height="19.8" fill="#9d978f" rx="3" />
<rect x="237.9" y="649" width="46.6" height="19.8" fill="#4b4b4b" rx="3" />
<rect x="340.4" y="649" width="46.6" height="19.8" fill="#9d978f" rx="3" />
<rect x="391.6" y="649" width="46.6" height="19.8" fill="#9d978f" rx="3" />
<rect x="494.1" y="649" width="46.6" height="19.8" fill="#9d978f" rx="3" />
<rect x="545.3" y="649" width="46.6" height="19.8" fill="#9d978f" rx="3" />
<rect x="596.6" y="649" width="46.6" height="19.8" fill="#4b4b4b" rx="3" />
<rect x="699.1" y="649" width="46.6" height="19.8" fill="#9d978f" rx="3" />
<rect x="750.3" y="649" width="46.6" height="19.8" fill="#9d978f" rx="3" />
<rect x="852.8" y="649" width="46.6" height="19.8" fill="#9d978f" rx="3" />
<rect x="904.0" y="649" width="46.6" height="19.8" fill="#9d978f" rx="3" />
</g>
<rect x="0" y="41" width="753" height="6" fill="url(#gShadowTop)" />
</svg></body></html>
